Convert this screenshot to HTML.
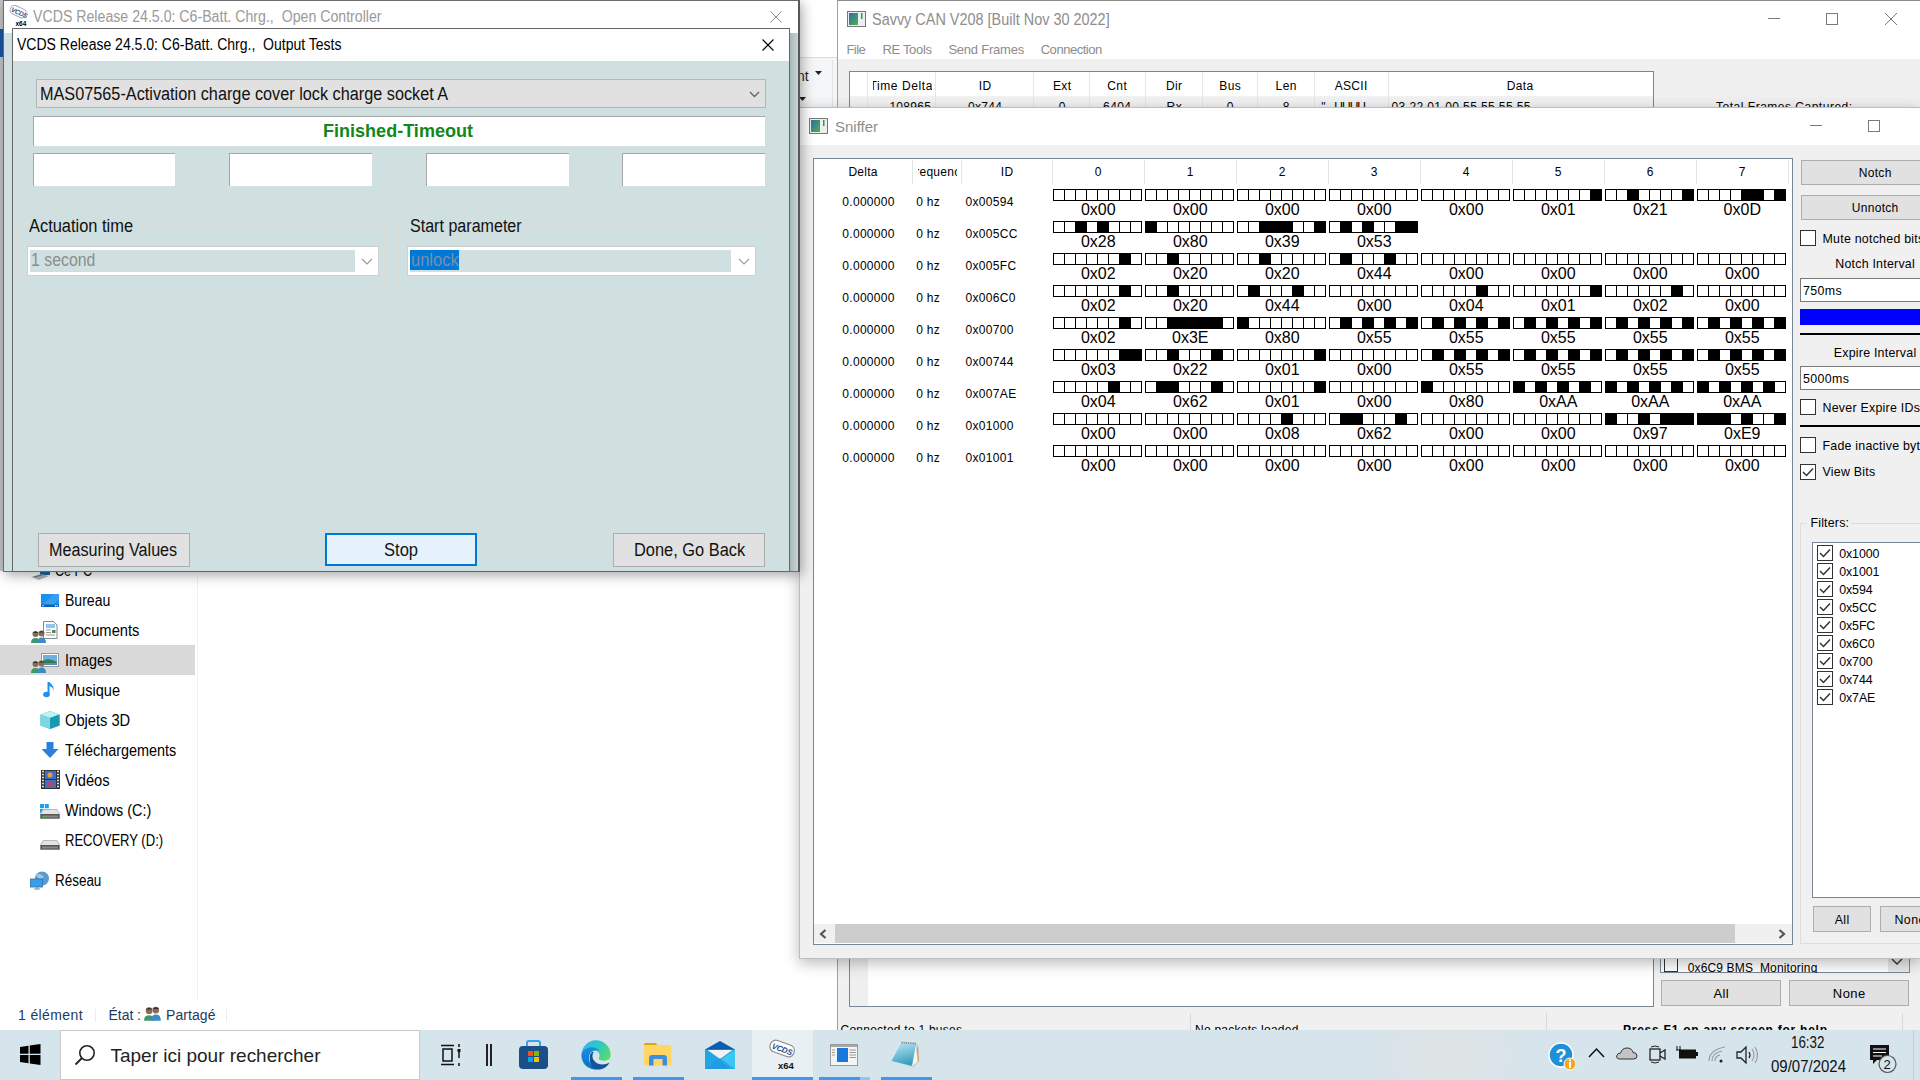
<!DOCTYPE html><html><head><meta charset="utf-8"><style>
html,body{margin:0;padding:0}
body{width:1920px;height:1080px;overflow:hidden;position:relative;background:#fff;font-family:"Liberation Sans",sans-serif}
.t{position:absolute;white-space:pre;line-height:1}
.r{position:absolute;box-sizing:border-box}
svg{position:absolute}
</style></head><body>
<div class="r" style="left:0px;top:0px;width:3px;height:571px;background:#c4c4c4"></div>
<div class="r" style="left:0px;top:29px;width:3px;height:28px;background:#1b56a5"></div>
<div class="r" style="left:798px;top:57px;width:40px;height:50px;background:#f5f6f7;border-top:1px solid #dadbdc"></div>
<div class="t" style="left:797.00px;top:68.00px;font-size:14px;line-height:16px;color:#1e1e1e;">nt</div>
<svg style="left:815px;top:71px" width="8" height="5"><path d="M0 0H7L3.5 4Z" fill="#222"/></svg>
<svg style="left:799px;top:97px" width="8" height="5"><path d="M0 0H7L3.5 4Z" fill="#222"/></svg>
<div class="r" style="left:832px;top:60px;width:1px;height:47px;background:#e2e3e4"></div>
<div class="r" style="left:197px;top:575px;width:1px;height:425px;background:#f0f0f0"></div>
<div class="r" style="left:0px;top:645px;width:195px;height:30px;background:#d9d9d9"></div>
<div class="t" style="left:65.40px;top:592.00px;font-size:16px;line-height:17px;color:#000;transform:scaleX(0.8779);transform-origin:0 0;">Bureau</div>
<div class="t" style="left:65.40px;top:622.00px;font-size:16px;line-height:17px;color:#000;transform:scaleX(0.9202);transform-origin:0 0;">Documents</div>
<div class="t" style="left:65.40px;top:652.00px;font-size:16px;line-height:17px;color:#000;transform:scaleX(0.8994);transform-origin:0 0;">Images</div>
<div class="t" style="left:65.40px;top:682.00px;font-size:16px;line-height:17px;color:#000;transform:scaleX(0.9094);transform-origin:0 0;">Musique</div>
<div class="t" style="left:65.40px;top:712.00px;font-size:16px;line-height:17px;color:#000;transform:scaleX(0.9154);transform-origin:0 0;">Objets 3D</div>
<div class="t" style="left:65.40px;top:742.00px;font-size:16px;line-height:17px;color:#000;transform:scaleX(0.9005);transform-origin:0 0;">Téléchargements</div>
<div class="t" style="left:65.40px;top:772.00px;font-size:16px;line-height:17px;color:#000;transform:scaleX(0.9169);transform-origin:0 0;">Vidéos</div>
<div class="t" style="left:65.40px;top:802.00px;font-size:16px;line-height:17px;color:#000;transform:scaleX(0.8979);transform-origin:0 0;">Windows (C:)</div>
<div class="t" style="left:65.40px;top:832.00px;font-size:16px;line-height:17px;color:#000;transform:scaleX(0.8153);transform-origin:0 0;">RECOVERY (D:)</div>
<div class="t" style="left:55.30px;top:872.00px;font-size:16px;line-height:17px;color:#000;transform:scaleX(0.8400);transform-origin:0 0;">Réseau</div>
<div class="t" style="left:55.30px;top:562.00px;font-size:16px;line-height:17px;color:#000;transform:scaleX(0.7852);transform-origin:0 0;">Ce PC</div>
<svg style="left:30px;top:566px" width="21" height="15"><path d="M10 2H20V9H10Z" fill="#1a6aa8"/><path d="M1 11L11 8L19 10L9 14Z" fill="#9aa4aa" opacity="0.8"/><path d="M4 11L12 9" stroke="#6a747a" stroke-width="1"/></svg>
<svg style="left:41px;top:594px" width="18" height="13"><rect x="0" y="0" width="18" height="13" fill="#1e90f0"/><path d="M0 13L12 0H18V5L10 13Z" fill="#fff" opacity="0.12"/><rect x="0" y="10.5" width="18" height="2.5" fill="#0c60b8"/><circle cx="2" cy="11.8" r="0.7" fill="#fff"/><circle cx="14.5" cy="11.8" r="0.7" fill="#fff"/><circle cx="16.2" cy="11.8" r="0.7" fill="#fff"/></svg>
<svg style="left:43px;top:621px" width="15" height="18"><path d="M0.5 0.5H10.5L14 4V17.5H0.5Z" fill="#fff" stroke="#888"/><path d="M3 4H12M3 6H12" stroke="#1e8be8" stroke-width="1.1"/><path d="M3 9H8M3 11.5H8M3 14H12" stroke="#999"/><rect x="9" y="9" width="3.5" height="3" fill="#4a8a5a"/></svg>
<svg style="left:31px;top:630px" width="16" height="14"><circle cx="4.5" cy="4" r="3" fill="#8a6a50"/><path d="M1.5 3Q4.5 0 7.5 3" fill="#333"/><path d="M0 13Q0 8 4.5 8Q9 8 9 13Z" fill="#3c9a6a"/><circle cx="10.5" cy="3.5" r="3" fill="#8a6a50"/><path d="M7.5 2.5Q10.5 -0.5 13.5 2.5" fill="#333"/><path d="M6.5 13Q6.5 7.5 10.5 7.5Q15 7.5 15 13Z" fill="#3d8ac8"/></svg>
<svg style="left:41px;top:653px" width="18" height="14"><rect x="0.5" y="0.5" width="17" height="13" fill="#fff" stroke="#999"/><rect x="2" y="2" width="14" height="10" fill="#6ab0e0"/><path d="M2 8Q7 4 16 9V12H2Z" fill="#3a7a50"/><rect x="2" y="10" width="14" height="2" fill="#4a90c0"/></svg>
<svg style="left:31px;top:660px" width="16" height="14"><circle cx="4.5" cy="4" r="3" fill="#8a6a50"/><path d="M1.5 3Q4.5 0 7.5 3" fill="#333"/><path d="M0 13Q0 8 4.5 8Q9 8 9 13Z" fill="#3c9a6a"/><circle cx="10.5" cy="3.5" r="3" fill="#8a6a50"/><path d="M7.5 2.5Q10.5 -0.5 13.5 2.5" fill="#333"/><path d="M6.5 13Q6.5 7.5 10.5 7.5Q15 7.5 15 13Z" fill="#3d8ac8"/></svg>
<svg style="left:43px;top:681px" width="13" height="17"><path d="M5.5 1V13" stroke="#1e90f0" stroke-width="2"/><ellipse cx="3.5" cy="13.5" rx="3.3" ry="2.8" fill="#1e90f0"/><path d="M6 1Q12 5 10 11Q11 6 6 5Z" fill="#1e90f0"/></svg>
<svg style="left:40px;top:711px" width="20" height="18"><path d="M10 0L19.5 3.5V14.5L10 18L0.5 14.5V3.5Z" fill="#2bb8c8"/><path d="M10 0L19.5 3.5L10 7L0.5 3.5Z" fill="#bff0f5"/><path d="M0.5 3.5L10 7V18L0.5 14.5Z" fill="#7ad8e5"/><path d="M10 7L19.5 3.5V14.5L10 18Z" fill="#1a9aae"/></svg>
<svg style="left:41px;top:742px" width="18" height="16"><path d="M5.5 0H12.5V7H17.5L9 16L0.5 7H5.5Z" fill="#2a80da"/></svg>
<svg style="left:41px;top:770px" width="19" height="19"><rect x="0" y="0" width="19" height="19" fill="#333"/><rect x="4" y="1" width="11" height="8" fill="#3a6fd0"/><rect x="4" y="10" width="11" height="8" fill="#3a6fd0"/><circle cx="9" cy="5" r="2.5" fill="#e8a030"/><circle cx="9.5" cy="14" r="2.5" fill="#d04040"/><path d="M1 1.5H3M1 4.5H3M1 7.5H3M1 10.5H3M1 13.5H3M1 16.5H3M16 1.5H18M16 4.5H18M16 7.5H18M16 10.5H18M16 13.5H18M16 16.5H18" stroke="#ddd" stroke-width="1.5"/></svg>
<svg style="left:40px;top:804px" width="9" height="9"><rect x="0" y="0" width="4" height="4" fill="#1aa0f0"/><rect x="4.8" y="0" width="4" height="4" fill="#1aa0f0"/><rect x="0" y="4.8" width="4" height="4" fill="#1aa0f0"/><rect x="4.8" y="4.8" width="4" height="4" fill="#1aa0f0"/></svg>
<svg style="left:40px;top:809px" width="20" height="10"><path d="M3 0.5H17L19.5 5V9.5H0.5V5Z" fill="#e4e4e4" stroke="#aaa" stroke-width="0.8"/><rect x="0.5" y="5" width="19" height="4.5" fill="#555"/><rect x="2" y="6.5" width="16" height="2" fill="#888"/><rect x="3" y="7" width="2" height="1.2" fill="#3c3"/></svg>
<svg style="left:40px;top:840px" width="20" height="10"><path d="M3 0.5H17L19.5 5V9.5H0.5V5Z" fill="#e4e4e4" stroke="#aaa" stroke-width="0.8"/><rect x="0.5" y="5" width="19" height="4.5" fill="#555"/><rect x="2" y="6.5" width="16" height="2" fill="#888"/><rect x="3" y="7" width="2" height="1.2" fill="#3c3"/></svg>
<svg style="left:30px;top:871px" width="20" height="19"><circle cx="12" cy="7.5" r="7" fill="#5a9ad0"/><path d="M6 4Q10 1 14 6Q11 9 8 7Z" fill="#9ac8ea"/><rect x="0.5" y="8" width="12" height="8" fill="#39a0e8" stroke="#2a70b0" stroke-width="0.8"/><path d="M4 18H10M7 16V18" stroke="#888" stroke-width="1.2"/></svg>
<div class="t" style="left:18.00px;top:1007.00px;font-size:14px;line-height:16px;color:#1e3a5f;letter-spacing:0.380px;">1 élément</div>
<div class="r" style="left:95px;top:1009px;width:1px;height:13px;background:#ececec"></div>
<div class="t" style="left:108.50px;top:1007.00px;font-size:14px;line-height:16px;color:#1e3a5f;letter-spacing:-0.038px;">État :</div>
<svg style="left:144px;top:1006px" width="18" height="16" viewBox="0 0 16 14"><circle cx="4.5" cy="4" r="3" fill="#8a6a50"/><path d="M1.5 3Q4.5 0 7.5 3" fill="#333"/><path d="M0 13Q0 8 4.5 8Q9 8 9 13Z" fill="#3c9a6a"/><circle cx="10.5" cy="3.5" r="3" fill="#8a6a50"/><path d="M7.5 2.5Q10.5 -0.5 13.5 2.5" fill="#333"/><path d="M6.5 13Q6.5 7.5 10.5 7.5Q15 7.5 15 13Z" fill="#3d8ac8"/></svg>
<div class="t" style="left:166.00px;top:1007.00px;font-size:14px;line-height:16px;color:#1e3a5f;letter-spacing:0.072px;">Partagé</div>
<div class="r" style="left:226px;top:1009px;width:1px;height:13px;background:#ececec"></div>
<div class="r" style="left:837px;top:0px;width:1083px;height:1080px;background:#f0f0f0;border-left:1px solid #a0a0a0;border-top:1px solid #8c8c8c"></div>
<div class="r" style="left:838px;top:1px;width:1082px;height:58px;background:#fff"></div>
<svg width="0" height="0" style="position:absolute"><defs><linearGradient id="gq" x1="0" y1="0" x2="1" y2="1"><stop offset="0" stop-color="#2f6fa8"/><stop offset="1" stop-color="#4caf50"/></linearGradient></defs></svg>
<svg style="left:847px;top:11px" width="19" height="16"><rect x="0.5" y="0.5" width="18" height="15" fill="#eee" stroke="#777"/><rect x="2" y="2" width="9" height="12" fill="url(#gq)"/><rect x="14" y="2" width="1.5" height="6" fill="#2a9a5a"/></svg>
<div class="t" style="left:872.30px;top:11.00px;font-size:16px;line-height:17px;color:#8d8d8d;transform:scaleX(0.9028);transform-origin:0 0;">Savvy CAN V208 [Built Nov 30 2022]</div>
<div class="r" style="left:1768px;top:18px;width:12px;height:1px;background:#7a7a7a"></div>
<div class="r" style="left:1826px;top:13px;width:12px;height:12px;border:1px solid #7a7a7a"></div>
<svg style="left:1884px;top:12px" width="14" height="14"><path d="M1 1L13 13M13 1L1 13" stroke="#7a7a7a" stroke-width="1"/></svg>
<div class="t" style="left:846.50px;top:42.00px;font-size:13px;line-height:15px;color:#8c8c8c;letter-spacing:-0.577px;">File</div>
<div class="t" style="left:882.50px;top:42.00px;font-size:13px;line-height:15px;color:#8c8c8c;letter-spacing:-0.329px;">RE Tools</div>
<div class="t" style="left:948.40px;top:42.00px;font-size:13px;line-height:15px;color:#8c8c8c;letter-spacing:-0.227px;">Send Frames</div>
<div class="t" style="left:1040.70px;top:42.00px;font-size:13px;line-height:15px;color:#8c8c8c;letter-spacing:-0.464px;">Connection</div>
<div class="r" style="left:849px;top:71px;width:805px;height:40px;background:#fff;border:1px solid #7a8594"></div>
<div class="r" style="left:850px;top:96px;width:803px;height:15px;background:#f2f2f2"></div>
<div class="r" style="left:867px;top:72px;width:1px;height:36px;background:#e6e6e6"></div>
<div class="r" style="left:935px;top:72px;width:1px;height:36px;background:#e6e6e6"></div>
<div class="r" style="left:1033px;top:72px;width:1px;height:36px;background:#e6e6e6"></div>
<div class="r" style="left:1089px;top:72px;width:1px;height:36px;background:#e6e6e6"></div>
<div class="r" style="left:1145px;top:72px;width:1px;height:36px;background:#e6e6e6"></div>
<div class="r" style="left:1202px;top:72px;width:1px;height:36px;background:#e6e6e6"></div>
<div class="r" style="left:1257px;top:72px;width:1px;height:36px;background:#e6e6e6"></div>
<div class="r" style="left:1314px;top:72px;width:1px;height:36px;background:#e6e6e6"></div>
<div class="r" style="left:1388px;top:72px;width:1px;height:36px;background:#e6e6e6"></div>
<div style="position:absolute;overflow:hidden;left:873px;top:74.00px;width:58.5px;height:22px"><div class="t" style="left:-3.50px;top:5px;font-size:12px;line-height:14px;color:#000;letter-spacing:0.600px;">Time Delta</div></div>
<div class="t" style="left:978.76px;top:79.00px;font-size:12px;line-height:14px;color:#000;letter-spacing:0.480px;">ID</div>
<div class="t" style="left:1052.98px;top:79.00px;font-size:12px;line-height:14px;color:#000;letter-spacing:0.347px;">Ext</div>
<div class="t" style="left:1107.30px;top:79.00px;font-size:12px;line-height:14px;color:#000;letter-spacing:0.373px;">Cnt</div>
<div class="t" style="left:1166.04px;top:79.00px;font-size:12px;line-height:14px;color:#000;letter-spacing:0.306px;">Dir</div>
<div class="t" style="left:1219.24px;top:79.00px;font-size:12px;line-height:14px;color:#000;letter-spacing:0.414px;">Bus</div>
<div class="t" style="left:1275.58px;top:79.00px;font-size:12px;line-height:14px;color:#000;letter-spacing:0.401px;">Len</div>
<div class="t" style="left:1334.71px;top:79.00px;font-size:12px;line-height:14px;color:#000;letter-spacing:0.313px;">ASCII</div>
<div class="t" style="left:1506.80px;top:79.00px;font-size:12px;line-height:14px;color:#000;letter-spacing:0.338px;">Data</div>
<div class="t" style="left:889.38px;top:100.00px;font-size:12px;line-height:14px;color:#000;letter-spacing:0.320px;">108965</div>
<div class="t" style="left:968.00px;top:100.00px;font-size:12px;line-height:14px;color:#000;letter-spacing:0.327px;">0x744</div>
<div class="t" style="left:1058.67px;top:100.00px;font-size:12px;line-height:14px;color:#000;">0</div>
<div class="t" style="left:1103.12px;top:100.00px;font-size:12px;line-height:14px;color:#000;letter-spacing:0.356px;">6404</div>
<div class="t" style="left:1166.39px;top:100.00px;font-size:12px;line-height:14px;color:#000;letter-spacing:0.586px;">Rx</div>
<div class="t" style="left:1226.67px;top:100.00px;font-size:12px;line-height:14px;color:#000;">0</div>
<div class="t" style="left:1282.67px;top:100.00px;font-size:12px;line-height:14px;color:#000;">8</div>
<div class="t" style="left:1321.20px;top:100.00px;font-size:12px;line-height:14px;color:#000;">"</div>
<div class="t" style="left:1334.30px;top:100.00px;font-size:12px;line-height:14px;color:#000;letter-spacing:-0.993px;">UUUU</div>
<div class="t" style="left:1391.50px;top:100.00px;font-size:12px;line-height:14px;color:#000;letter-spacing:0.403px;">03 22 01 00 55 55 55 55</div>
<div class="t" style="left:1716.10px;top:100.00px;font-size:12px;line-height:14px;color:#000;letter-spacing:0.505px;">Total Frames Captured:</div>
<div class="r" style="left:849px;top:955px;width:805px;height:52px;background:#fff;border:1px solid #7a8594;border-top:none"></div>
<div class="r" style="left:850px;top:955px;width:18px;height:51px;background:#efefef"></div>
<div class="r" style="left:1660px;top:955px;width:250px;height:18px;background:#fff;border:1px solid #7a8594;border-top:none"></div>
<div class="r" style="left:1664px;top:958px;width:14px;height:14px;border:1px solid #333;background:#fff"></div>
<div class="t" style="left:1687.70px;top:961.00px;font-size:12px;line-height:14px;color:#000;letter-spacing:0.152px;clip-path:inset(0 0 2px 0)">0x6C9 BMS_Monitoring</div>
<div class="r" style="left:1888px;top:955px;width:21px;height:17px;background:#e8e8e8"></div>
<svg style="left:1891px;top:958px" width="12" height="7"><path d="M1 1L6 6L11 1" fill="none" stroke="#333" stroke-width="1.4"/></svg>
<div class="r" style="left:1661px;top:980px;width:120px;height:26px;background:#e1e1e1;border:1px solid #adadad"></div>
<div class="t" style="left:1713.50px;top:986.00px;font-size:13px;line-height:15px;color:#000;letter-spacing:0.289px;">All</div>
<div class="r" style="left:1789px;top:980px;width:120px;height:26px;background:#e1e1e1;border:1px solid #adadad"></div>
<div class="t" style="left:1832.84px;top:986.00px;font-size:13px;line-height:15px;color:#000;letter-spacing:0.414px;">None</div>
<div class="t" style="left:840.50px;top:1023.00px;font-size:12px;line-height:14px;color:#000;letter-spacing:0.246px;">Connected to 1 buses</div>
<div class="r" style="left:1190px;top:1013px;width:1px;height:17px;background:#d8d8d8"></div>
<div class="t" style="left:1195.00px;top:1023.00px;font-size:12px;line-height:14px;color:#000;letter-spacing:0.249px;">No packets loaded</div>
<div class="r" style="left:1546px;top:1013px;width:1px;height:17px;background:#d8d8d8"></div>
<div class="t" style="left:1623.00px;top:1023.00px;font-size:12px;line-height:14px;color:#000;letter-spacing:0.754px;font-weight:bold;">Press F1 on any screen for help</div>
<div class="r" style="left:1902px;top:1013px;width:1px;height:17px;background:#d8d8d8"></div>
<div class="r" style="left:799px;top:107px;width:1121px;height:852px;background:#f0f0f0;border:1px solid #bdbdbd;border-right:none;box-shadow:0 4px 14px rgba(0,0,0,0.28)"></div>
<div class="r" style="left:800px;top:108px;width:1120px;height:37px;background:#fff"></div>
<svg style="left:809px;top:118px" width="19" height="16"><rect x="0.5" y="0.5" width="18" height="15" fill="#eee" stroke="#777"/><rect x="2" y="2" width="9" height="12" fill="url(#gq)"/><rect x="14" y="2" width="1.5" height="6" fill="#2a9a5a"/></svg>
<div class="t" style="left:835.00px;top:118.00px;font-size:15px;line-height:17px;color:#8d8d8d;">Sniffer</div>
<div class="r" style="left:1810px;top:125px;width:12px;height:1px;background:#7a7a7a"></div>
<div class="r" style="left:1868px;top:120px;width:12px;height:12px;border:1px solid #7a7a7a"></div>
<div class="r" style="left:813px;top:158px;width:980px;height:787px;background:#fff;border:1px solid #7a8594"></div>
<div class="r" style="left:912px;top:160px;width:1px;height:24px;background:#e5e5e5"></div>
<div class="r" style="left:961px;top:160px;width:1px;height:24px;background:#e5e5e5"></div>
<div class="r" style="left:1052px;top:160px;width:1px;height:24px;background:#e5e5e5"></div>
<div class="r" style="left:1144px;top:160px;width:1px;height:24px;background:#e5e5e5"></div>
<div class="r" style="left:1236px;top:160px;width:1px;height:24px;background:#e5e5e5"></div>
<div class="r" style="left:1328px;top:160px;width:1px;height:24px;background:#e5e5e5"></div>
<div class="r" style="left:1420px;top:160px;width:1px;height:24px;background:#e5e5e5"></div>
<div class="r" style="left:1512px;top:160px;width:1px;height:24px;background:#e5e5e5"></div>
<div class="r" style="left:1604px;top:160px;width:1px;height:24px;background:#e5e5e5"></div>
<div class="r" style="left:1696px;top:160px;width:1px;height:24px;background:#e5e5e5"></div>
<div class="r" style="left:1788px;top:160px;width:1px;height:24px;background:#e5e5e5"></div>
<div class="t" style="left:848.40px;top:165.00px;font-size:12px;line-height:14px;color:#000;letter-spacing:0.281px;">Delta</div>
<div style="position:absolute;overflow:hidden;left:917.5px;top:160.00px;width:39.5px;height:22px"><div class="t" style="left:-9.98px;top:5px;font-size:12px;line-height:14px;color:#000;letter-spacing:0.284px;">Frequency</div></div>
<div class="t" style="left:1000.76px;top:165.00px;font-size:12px;line-height:14px;color:#000;letter-spacing:0.480px;">ID</div>
<div class="t" style="left:1094.67px;top:165.00px;font-size:12px;line-height:14px;color:#000;">0</div>
<div class="t" style="left:1186.67px;top:165.00px;font-size:12px;line-height:14px;color:#000;">1</div>
<div class="t" style="left:1278.67px;top:165.00px;font-size:12px;line-height:14px;color:#000;">2</div>
<div class="t" style="left:1370.67px;top:165.00px;font-size:12px;line-height:14px;color:#000;">3</div>
<div class="t" style="left:1462.67px;top:165.00px;font-size:12px;line-height:14px;color:#000;">4</div>
<div class="t" style="left:1554.67px;top:165.00px;font-size:12px;line-height:14px;color:#000;">5</div>
<div class="t" style="left:1646.67px;top:165.00px;font-size:12px;line-height:14px;color:#000;">6</div>
<div class="t" style="left:1738.67px;top:165.00px;font-size:12px;line-height:14px;color:#000;">7</div>
<div class="t" style="left:842.36px;top:195.00px;font-size:12px;line-height:14px;color:#000;letter-spacing:0.286px;">0.000000</div>
<div class="t" style="left:916.20px;top:195.00px;font-size:12px;line-height:14px;color:#000;letter-spacing:0.302px;">0 hz</div>
<div class="t" style="left:965.50px;top:195.00px;font-size:12px;line-height:14px;color:#000;letter-spacing:0.307px;">0x00594</div>
<div class="t" style="left:1080.94px;top:201.00px;font-size:16px;line-height:17px;color:#000;">0x00</div>
<div class="t" style="left:1172.94px;top:201.00px;font-size:16px;line-height:17px;color:#000;">0x00</div>
<div class="t" style="left:1264.94px;top:201.00px;font-size:16px;line-height:17px;color:#000;">0x00</div>
<div class="t" style="left:1356.94px;top:201.00px;font-size:16px;line-height:17px;color:#000;">0x00</div>
<div class="t" style="left:1448.94px;top:201.00px;font-size:16px;line-height:17px;color:#000;">0x00</div>
<div class="t" style="left:1540.94px;top:201.00px;font-size:16px;line-height:17px;color:#000;">0x01</div>
<div class="t" style="left:1632.94px;top:201.00px;font-size:16px;line-height:17px;color:#000;">0x21</div>
<div class="t" style="left:1723.62px;top:201.00px;font-size:16px;line-height:17px;color:#000;">0x0D</div>
<div class="t" style="left:842.36px;top:227.00px;font-size:12px;line-height:14px;color:#000;letter-spacing:0.286px;">0.000000</div>
<div class="t" style="left:916.20px;top:227.00px;font-size:12px;line-height:14px;color:#000;letter-spacing:0.302px;">0 hz</div>
<div class="t" style="left:965.50px;top:227.00px;font-size:12px;line-height:14px;color:#000;letter-spacing:0.334px;">0x005CC</div>
<div class="t" style="left:1080.94px;top:233.00px;font-size:16px;line-height:17px;color:#000;">0x28</div>
<div class="t" style="left:1172.94px;top:233.00px;font-size:16px;line-height:17px;color:#000;">0x80</div>
<div class="t" style="left:1264.94px;top:233.00px;font-size:16px;line-height:17px;color:#000;">0x39</div>
<div class="t" style="left:1356.94px;top:233.00px;font-size:16px;line-height:17px;color:#000;">0x53</div>
<div class="t" style="left:842.36px;top:259.00px;font-size:12px;line-height:14px;color:#000;letter-spacing:0.286px;">0.000000</div>
<div class="t" style="left:916.20px;top:259.00px;font-size:12px;line-height:14px;color:#000;letter-spacing:0.302px;">0 hz</div>
<div class="t" style="left:965.50px;top:259.00px;font-size:12px;line-height:14px;color:#000;letter-spacing:0.325px;">0x005FC</div>
<div class="t" style="left:1080.94px;top:265.00px;font-size:16px;line-height:17px;color:#000;">0x02</div>
<div class="t" style="left:1172.94px;top:265.00px;font-size:16px;line-height:17px;color:#000;">0x20</div>
<div class="t" style="left:1264.94px;top:265.00px;font-size:16px;line-height:17px;color:#000;">0x20</div>
<div class="t" style="left:1356.94px;top:265.00px;font-size:16px;line-height:17px;color:#000;">0x44</div>
<div class="t" style="left:1448.94px;top:265.00px;font-size:16px;line-height:17px;color:#000;">0x00</div>
<div class="t" style="left:1540.94px;top:265.00px;font-size:16px;line-height:17px;color:#000;">0x00</div>
<div class="t" style="left:1632.94px;top:265.00px;font-size:16px;line-height:17px;color:#000;">0x00</div>
<div class="t" style="left:1724.94px;top:265.00px;font-size:16px;line-height:17px;color:#000;">0x00</div>
<div class="t" style="left:842.36px;top:291.00px;font-size:12px;line-height:14px;color:#000;letter-spacing:0.286px;">0.000000</div>
<div class="t" style="left:916.20px;top:291.00px;font-size:12px;line-height:14px;color:#000;letter-spacing:0.302px;">0 hz</div>
<div class="t" style="left:965.50px;top:291.00px;font-size:12px;line-height:14px;color:#000;letter-spacing:0.320px;">0x006C0</div>
<div class="t" style="left:1080.94px;top:297.00px;font-size:16px;line-height:17px;color:#000;">0x02</div>
<div class="t" style="left:1172.94px;top:297.00px;font-size:16px;line-height:17px;color:#000;">0x20</div>
<div class="t" style="left:1264.94px;top:297.00px;font-size:16px;line-height:17px;color:#000;">0x44</div>
<div class="t" style="left:1356.94px;top:297.00px;font-size:16px;line-height:17px;color:#000;">0x00</div>
<div class="t" style="left:1448.94px;top:297.00px;font-size:16px;line-height:17px;color:#000;">0x04</div>
<div class="t" style="left:1540.94px;top:297.00px;font-size:16px;line-height:17px;color:#000;">0x01</div>
<div class="t" style="left:1632.94px;top:297.00px;font-size:16px;line-height:17px;color:#000;">0x02</div>
<div class="t" style="left:1724.94px;top:297.00px;font-size:16px;line-height:17px;color:#000;">0x00</div>
<div class="t" style="left:842.36px;top:323.00px;font-size:12px;line-height:14px;color:#000;letter-spacing:0.286px;">0.000000</div>
<div class="t" style="left:916.20px;top:323.00px;font-size:12px;line-height:14px;color:#000;letter-spacing:0.302px;">0 hz</div>
<div class="t" style="left:965.50px;top:323.00px;font-size:12px;line-height:14px;color:#000;letter-spacing:0.307px;">0x00700</div>
<div class="t" style="left:1080.94px;top:329.00px;font-size:16px;line-height:17px;color:#000;">0x02</div>
<div class="t" style="left:1172.06px;top:329.00px;font-size:16px;line-height:17px;color:#000;">0x3E</div>
<div class="t" style="left:1264.94px;top:329.00px;font-size:16px;line-height:17px;color:#000;">0x80</div>
<div class="t" style="left:1356.94px;top:329.00px;font-size:16px;line-height:17px;color:#000;">0x55</div>
<div class="t" style="left:1448.94px;top:329.00px;font-size:16px;line-height:17px;color:#000;">0x55</div>
<div class="t" style="left:1540.94px;top:329.00px;font-size:16px;line-height:17px;color:#000;">0x55</div>
<div class="t" style="left:1632.94px;top:329.00px;font-size:16px;line-height:17px;color:#000;">0x55</div>
<div class="t" style="left:1724.94px;top:329.00px;font-size:16px;line-height:17px;color:#000;">0x55</div>
<div class="t" style="left:842.36px;top:355.00px;font-size:12px;line-height:14px;color:#000;letter-spacing:0.286px;">0.000000</div>
<div class="t" style="left:916.20px;top:355.00px;font-size:12px;line-height:14px;color:#000;letter-spacing:0.302px;">0 hz</div>
<div class="t" style="left:965.50px;top:355.00px;font-size:12px;line-height:14px;color:#000;letter-spacing:0.307px;">0x00744</div>
<div class="t" style="left:1080.94px;top:361.00px;font-size:16px;line-height:17px;color:#000;">0x03</div>
<div class="t" style="left:1172.94px;top:361.00px;font-size:16px;line-height:17px;color:#000;">0x22</div>
<div class="t" style="left:1264.94px;top:361.00px;font-size:16px;line-height:17px;color:#000;">0x01</div>
<div class="t" style="left:1356.94px;top:361.00px;font-size:16px;line-height:17px;color:#000;">0x00</div>
<div class="t" style="left:1448.94px;top:361.00px;font-size:16px;line-height:17px;color:#000;">0x55</div>
<div class="t" style="left:1540.94px;top:361.00px;font-size:16px;line-height:17px;color:#000;">0x55</div>
<div class="t" style="left:1632.94px;top:361.00px;font-size:16px;line-height:17px;color:#000;">0x55</div>
<div class="t" style="left:1724.94px;top:361.00px;font-size:16px;line-height:17px;color:#000;">0x55</div>
<div class="t" style="left:842.36px;top:387.00px;font-size:12px;line-height:14px;color:#000;letter-spacing:0.286px;">0.000000</div>
<div class="t" style="left:916.20px;top:387.00px;font-size:12px;line-height:14px;color:#000;letter-spacing:0.302px;">0 hz</div>
<div class="t" style="left:965.50px;top:387.00px;font-size:12px;line-height:14px;color:#000;letter-spacing:0.325px;">0x007AE</div>
<div class="t" style="left:1080.94px;top:393.00px;font-size:16px;line-height:17px;color:#000;">0x04</div>
<div class="t" style="left:1172.94px;top:393.00px;font-size:16px;line-height:17px;color:#000;">0x62</div>
<div class="t" style="left:1264.94px;top:393.00px;font-size:16px;line-height:17px;color:#000;">0x01</div>
<div class="t" style="left:1356.94px;top:393.00px;font-size:16px;line-height:17px;color:#000;">0x00</div>
<div class="t" style="left:1448.94px;top:393.00px;font-size:16px;line-height:17px;color:#000;">0x80</div>
<div class="t" style="left:1539.14px;top:393.00px;font-size:16px;line-height:17px;color:#000;">0xAA</div>
<div class="t" style="left:1631.14px;top:393.00px;font-size:16px;line-height:17px;color:#000;">0xAA</div>
<div class="t" style="left:1723.14px;top:393.00px;font-size:16px;line-height:17px;color:#000;">0xAA</div>
<div class="t" style="left:842.36px;top:419.00px;font-size:12px;line-height:14px;color:#000;letter-spacing:0.286px;">0.000000</div>
<div class="t" style="left:916.20px;top:419.00px;font-size:12px;line-height:14px;color:#000;letter-spacing:0.302px;">0 hz</div>
<div class="t" style="left:965.50px;top:419.00px;font-size:12px;line-height:14px;color:#000;letter-spacing:0.307px;">0x01000</div>
<div class="t" style="left:1080.94px;top:425.00px;font-size:16px;line-height:17px;color:#000;">0x00</div>
<div class="t" style="left:1172.94px;top:425.00px;font-size:16px;line-height:17px;color:#000;">0x00</div>
<div class="t" style="left:1264.94px;top:425.00px;font-size:16px;line-height:17px;color:#000;">0x08</div>
<div class="t" style="left:1356.94px;top:425.00px;font-size:16px;line-height:17px;color:#000;">0x62</div>
<div class="t" style="left:1448.94px;top:425.00px;font-size:16px;line-height:17px;color:#000;">0x00</div>
<div class="t" style="left:1540.94px;top:425.00px;font-size:16px;line-height:17px;color:#000;">0x00</div>
<div class="t" style="left:1632.94px;top:425.00px;font-size:16px;line-height:17px;color:#000;">0x97</div>
<div class="t" style="left:1724.06px;top:425.00px;font-size:16px;line-height:17px;color:#000;">0xE9</div>
<div class="t" style="left:842.36px;top:451.00px;font-size:12px;line-height:14px;color:#000;letter-spacing:0.286px;">0.000000</div>
<div class="t" style="left:916.20px;top:451.00px;font-size:12px;line-height:14px;color:#000;letter-spacing:0.302px;">0 hz</div>
<div class="t" style="left:965.50px;top:451.00px;font-size:12px;line-height:14px;color:#000;letter-spacing:0.307px;">0x01001</div>
<div class="t" style="left:1080.94px;top:457.00px;font-size:16px;line-height:17px;color:#000;">0x00</div>
<div class="t" style="left:1172.94px;top:457.00px;font-size:16px;line-height:17px;color:#000;">0x00</div>
<div class="t" style="left:1264.94px;top:457.00px;font-size:16px;line-height:17px;color:#000;">0x00</div>
<div class="t" style="left:1356.94px;top:457.00px;font-size:16px;line-height:17px;color:#000;">0x00</div>
<div class="t" style="left:1448.94px;top:457.00px;font-size:16px;line-height:17px;color:#000;">0x00</div>
<div class="t" style="left:1540.94px;top:457.00px;font-size:16px;line-height:17px;color:#000;">0x00</div>
<div class="t" style="left:1632.94px;top:457.00px;font-size:16px;line-height:17px;color:#000;">0x00</div>
<div class="t" style="left:1724.94px;top:457.00px;font-size:16px;line-height:17px;color:#000;">0x00</div>
<svg style="left:0;top:0" width="1920" height="1080" shape-rendering="crispEdges"><rect x="1053.5" y="189.5" width="88" height="11" fill="#fff" stroke="#000"/><path d="M1064.5 189V201" stroke="#000"/><path d="M1075.5 189V201" stroke="#000"/><path d="M1086.5 189V201" stroke="#000"/><path d="M1097.5 189V201" stroke="#000"/><path d="M1108.5 189V201" stroke="#000"/><path d="M1119.5 189V201" stroke="#000"/><path d="M1130.5 189V201" stroke="#000"/><rect x="1145.5" y="189.5" width="88" height="11" fill="#fff" stroke="#000"/><path d="M1156.5 189V201" stroke="#000"/><path d="M1167.5 189V201" stroke="#000"/><path d="M1178.5 189V201" stroke="#000"/><path d="M1189.5 189V201" stroke="#000"/><path d="M1200.5 189V201" stroke="#000"/><path d="M1211.5 189V201" stroke="#000"/><path d="M1222.5 189V201" stroke="#000"/><rect x="1237.5" y="189.5" width="88" height="11" fill="#fff" stroke="#000"/><path d="M1248.5 189V201" stroke="#000"/><path d="M1259.5 189V201" stroke="#000"/><path d="M1270.5 189V201" stroke="#000"/><path d="M1281.5 189V201" stroke="#000"/><path d="M1292.5 189V201" stroke="#000"/><path d="M1303.5 189V201" stroke="#000"/><path d="M1314.5 189V201" stroke="#000"/><rect x="1329.5" y="189.5" width="88" height="11" fill="#fff" stroke="#000"/><path d="M1340.5 189V201" stroke="#000"/><path d="M1351.5 189V201" stroke="#000"/><path d="M1362.5 189V201" stroke="#000"/><path d="M1373.5 189V201" stroke="#000"/><path d="M1384.5 189V201" stroke="#000"/><path d="M1395.5 189V201" stroke="#000"/><path d="M1406.5 189V201" stroke="#000"/><rect x="1421.5" y="189.5" width="88" height="11" fill="#fff" stroke="#000"/><path d="M1432.5 189V201" stroke="#000"/><path d="M1443.5 189V201" stroke="#000"/><path d="M1454.5 189V201" stroke="#000"/><path d="M1465.5 189V201" stroke="#000"/><path d="M1476.5 189V201" stroke="#000"/><path d="M1487.5 189V201" stroke="#000"/><path d="M1498.5 189V201" stroke="#000"/><rect x="1513.5" y="189.5" width="88" height="11" fill="#fff" stroke="#000"/><path d="M1524.5 189V201" stroke="#000"/><path d="M1535.5 189V201" stroke="#000"/><path d="M1546.5 189V201" stroke="#000"/><path d="M1557.5 189V201" stroke="#000"/><path d="M1568.5 189V201" stroke="#000"/><path d="M1579.5 189V201" stroke="#000"/><path d="M1590.5 189V201" stroke="#000"/><rect x="1590" y="189" width="12" height="12" fill="#000"/><rect x="1605.5" y="189.5" width="88" height="11" fill="#fff" stroke="#000"/><path d="M1616.5 189V201" stroke="#000"/><path d="M1627.5 189V201" stroke="#000"/><path d="M1638.5 189V201" stroke="#000"/><path d="M1649.5 189V201" stroke="#000"/><path d="M1660.5 189V201" stroke="#000"/><path d="M1671.5 189V201" stroke="#000"/><path d="M1682.5 189V201" stroke="#000"/><rect x="1627" y="189" width="12" height="12" fill="#000"/><rect x="1682" y="189" width="12" height="12" fill="#000"/><rect x="1697.5" y="189.5" width="88" height="11" fill="#fff" stroke="#000"/><path d="M1708.5 189V201" stroke="#000"/><path d="M1719.5 189V201" stroke="#000"/><path d="M1730.5 189V201" stroke="#000"/><path d="M1741.5 189V201" stroke="#000"/><path d="M1752.5 189V201" stroke="#000"/><path d="M1763.5 189V201" stroke="#000"/><path d="M1774.5 189V201" stroke="#000"/><rect x="1741" y="189" width="12" height="12" fill="#000"/><rect x="1752" y="189" width="12" height="12" fill="#000"/><rect x="1774" y="189" width="12" height="12" fill="#000"/><rect x="1053.5" y="221.5" width="88" height="11" fill="#fff" stroke="#000"/><path d="M1064.5 221V233" stroke="#000"/><path d="M1075.5 221V233" stroke="#000"/><path d="M1086.5 221V233" stroke="#000"/><path d="M1097.5 221V233" stroke="#000"/><path d="M1108.5 221V233" stroke="#000"/><path d="M1119.5 221V233" stroke="#000"/><path d="M1130.5 221V233" stroke="#000"/><rect x="1075" y="221" width="12" height="12" fill="#000"/><rect x="1097" y="221" width="12" height="12" fill="#000"/><rect x="1145.5" y="221.5" width="88" height="11" fill="#fff" stroke="#000"/><path d="M1156.5 221V233" stroke="#000"/><path d="M1167.5 221V233" stroke="#000"/><path d="M1178.5 221V233" stroke="#000"/><path d="M1189.5 221V233" stroke="#000"/><path d="M1200.5 221V233" stroke="#000"/><path d="M1211.5 221V233" stroke="#000"/><path d="M1222.5 221V233" stroke="#000"/><rect x="1145" y="221" width="12" height="12" fill="#000"/><rect x="1237.5" y="221.5" width="88" height="11" fill="#fff" stroke="#000"/><path d="M1248.5 221V233" stroke="#000"/><path d="M1259.5 221V233" stroke="#000"/><path d="M1270.5 221V233" stroke="#000"/><path d="M1281.5 221V233" stroke="#000"/><path d="M1292.5 221V233" stroke="#000"/><path d="M1303.5 221V233" stroke="#000"/><path d="M1314.5 221V233" stroke="#000"/><rect x="1259" y="221" width="12" height="12" fill="#000"/><rect x="1270" y="221" width="12" height="12" fill="#000"/><rect x="1281" y="221" width="12" height="12" fill="#000"/><rect x="1314" y="221" width="12" height="12" fill="#000"/><rect x="1329.5" y="221.5" width="88" height="11" fill="#fff" stroke="#000"/><path d="M1340.5 221V233" stroke="#000"/><path d="M1351.5 221V233" stroke="#000"/><path d="M1362.5 221V233" stroke="#000"/><path d="M1373.5 221V233" stroke="#000"/><path d="M1384.5 221V233" stroke="#000"/><path d="M1395.5 221V233" stroke="#000"/><path d="M1406.5 221V233" stroke="#000"/><rect x="1340" y="221" width="12" height="12" fill="#000"/><rect x="1362" y="221" width="12" height="12" fill="#000"/><rect x="1395" y="221" width="12" height="12" fill="#000"/><rect x="1406" y="221" width="12" height="12" fill="#000"/><rect x="1053.5" y="253.5" width="88" height="11" fill="#fff" stroke="#000"/><path d="M1064.5 253V265" stroke="#000"/><path d="M1075.5 253V265" stroke="#000"/><path d="M1086.5 253V265" stroke="#000"/><path d="M1097.5 253V265" stroke="#000"/><path d="M1108.5 253V265" stroke="#000"/><path d="M1119.5 253V265" stroke="#000"/><path d="M1130.5 253V265" stroke="#000"/><rect x="1119" y="253" width="12" height="12" fill="#000"/><rect x="1145.5" y="253.5" width="88" height="11" fill="#fff" stroke="#000"/><path d="M1156.5 253V265" stroke="#000"/><path d="M1167.5 253V265" stroke="#000"/><path d="M1178.5 253V265" stroke="#000"/><path d="M1189.5 253V265" stroke="#000"/><path d="M1200.5 253V265" stroke="#000"/><path d="M1211.5 253V265" stroke="#000"/><path d="M1222.5 253V265" stroke="#000"/><rect x="1167" y="253" width="12" height="12" fill="#000"/><rect x="1237.5" y="253.5" width="88" height="11" fill="#fff" stroke="#000"/><path d="M1248.5 253V265" stroke="#000"/><path d="M1259.5 253V265" stroke="#000"/><path d="M1270.5 253V265" stroke="#000"/><path d="M1281.5 253V265" stroke="#000"/><path d="M1292.5 253V265" stroke="#000"/><path d="M1303.5 253V265" stroke="#000"/><path d="M1314.5 253V265" stroke="#000"/><rect x="1259" y="253" width="12" height="12" fill="#000"/><rect x="1329.5" y="253.5" width="88" height="11" fill="#fff" stroke="#000"/><path d="M1340.5 253V265" stroke="#000"/><path d="M1351.5 253V265" stroke="#000"/><path d="M1362.5 253V265" stroke="#000"/><path d="M1373.5 253V265" stroke="#000"/><path d="M1384.5 253V265" stroke="#000"/><path d="M1395.5 253V265" stroke="#000"/><path d="M1406.5 253V265" stroke="#000"/><rect x="1340" y="253" width="12" height="12" fill="#000"/><rect x="1384" y="253" width="12" height="12" fill="#000"/><rect x="1421.5" y="253.5" width="88" height="11" fill="#fff" stroke="#000"/><path d="M1432.5 253V265" stroke="#000"/><path d="M1443.5 253V265" stroke="#000"/><path d="M1454.5 253V265" stroke="#000"/><path d="M1465.5 253V265" stroke="#000"/><path d="M1476.5 253V265" stroke="#000"/><path d="M1487.5 253V265" stroke="#000"/><path d="M1498.5 253V265" stroke="#000"/><rect x="1513.5" y="253.5" width="88" height="11" fill="#fff" stroke="#000"/><path d="M1524.5 253V265" stroke="#000"/><path d="M1535.5 253V265" stroke="#000"/><path d="M1546.5 253V265" stroke="#000"/><path d="M1557.5 253V265" stroke="#000"/><path d="M1568.5 253V265" stroke="#000"/><path d="M1579.5 253V265" stroke="#000"/><path d="M1590.5 253V265" stroke="#000"/><rect x="1605.5" y="253.5" width="88" height="11" fill="#fff" stroke="#000"/><path d="M1616.5 253V265" stroke="#000"/><path d="M1627.5 253V265" stroke="#000"/><path d="M1638.5 253V265" stroke="#000"/><path d="M1649.5 253V265" stroke="#000"/><path d="M1660.5 253V265" stroke="#000"/><path d="M1671.5 253V265" stroke="#000"/><path d="M1682.5 253V265" stroke="#000"/><rect x="1697.5" y="253.5" width="88" height="11" fill="#fff" stroke="#000"/><path d="M1708.5 253V265" stroke="#000"/><path d="M1719.5 253V265" stroke="#000"/><path d="M1730.5 253V265" stroke="#000"/><path d="M1741.5 253V265" stroke="#000"/><path d="M1752.5 253V265" stroke="#000"/><path d="M1763.5 253V265" stroke="#000"/><path d="M1774.5 253V265" stroke="#000"/><rect x="1053.5" y="285.5" width="88" height="11" fill="#fff" stroke="#000"/><path d="M1064.5 285V297" stroke="#000"/><path d="M1075.5 285V297" stroke="#000"/><path d="M1086.5 285V297" stroke="#000"/><path d="M1097.5 285V297" stroke="#000"/><path d="M1108.5 285V297" stroke="#000"/><path d="M1119.5 285V297" stroke="#000"/><path d="M1130.5 285V297" stroke="#000"/><rect x="1119" y="285" width="12" height="12" fill="#000"/><rect x="1145.5" y="285.5" width="88" height="11" fill="#fff" stroke="#000"/><path d="M1156.5 285V297" stroke="#000"/><path d="M1167.5 285V297" stroke="#000"/><path d="M1178.5 285V297" stroke="#000"/><path d="M1189.5 285V297" stroke="#000"/><path d="M1200.5 285V297" stroke="#000"/><path d="M1211.5 285V297" stroke="#000"/><path d="M1222.5 285V297" stroke="#000"/><rect x="1167" y="285" width="12" height="12" fill="#000"/><rect x="1237.5" y="285.5" width="88" height="11" fill="#fff" stroke="#000"/><path d="M1248.5 285V297" stroke="#000"/><path d="M1259.5 285V297" stroke="#000"/><path d="M1270.5 285V297" stroke="#000"/><path d="M1281.5 285V297" stroke="#000"/><path d="M1292.5 285V297" stroke="#000"/><path d="M1303.5 285V297" stroke="#000"/><path d="M1314.5 285V297" stroke="#000"/><rect x="1248" y="285" width="12" height="12" fill="#000"/><rect x="1292" y="285" width="12" height="12" fill="#000"/><rect x="1329.5" y="285.5" width="88" height="11" fill="#fff" stroke="#000"/><path d="M1340.5 285V297" stroke="#000"/><path d="M1351.5 285V297" stroke="#000"/><path d="M1362.5 285V297" stroke="#000"/><path d="M1373.5 285V297" stroke="#000"/><path d="M1384.5 285V297" stroke="#000"/><path d="M1395.5 285V297" stroke="#000"/><path d="M1406.5 285V297" stroke="#000"/><rect x="1421.5" y="285.5" width="88" height="11" fill="#fff" stroke="#000"/><path d="M1432.5 285V297" stroke="#000"/><path d="M1443.5 285V297" stroke="#000"/><path d="M1454.5 285V297" stroke="#000"/><path d="M1465.5 285V297" stroke="#000"/><path d="M1476.5 285V297" stroke="#000"/><path d="M1487.5 285V297" stroke="#000"/><path d="M1498.5 285V297" stroke="#000"/><rect x="1476" y="285" width="12" height="12" fill="#000"/><rect x="1513.5" y="285.5" width="88" height="11" fill="#fff" stroke="#000"/><path d="M1524.5 285V297" stroke="#000"/><path d="M1535.5 285V297" stroke="#000"/><path d="M1546.5 285V297" stroke="#000"/><path d="M1557.5 285V297" stroke="#000"/><path d="M1568.5 285V297" stroke="#000"/><path d="M1579.5 285V297" stroke="#000"/><path d="M1590.5 285V297" stroke="#000"/><rect x="1590" y="285" width="12" height="12" fill="#000"/><rect x="1605.5" y="285.5" width="88" height="11" fill="#fff" stroke="#000"/><path d="M1616.5 285V297" stroke="#000"/><path d="M1627.5 285V297" stroke="#000"/><path d="M1638.5 285V297" stroke="#000"/><path d="M1649.5 285V297" stroke="#000"/><path d="M1660.5 285V297" stroke="#000"/><path d="M1671.5 285V297" stroke="#000"/><path d="M1682.5 285V297" stroke="#000"/><rect x="1671" y="285" width="12" height="12" fill="#000"/><rect x="1697.5" y="285.5" width="88" height="11" fill="#fff" stroke="#000"/><path d="M1708.5 285V297" stroke="#000"/><path d="M1719.5 285V297" stroke="#000"/><path d="M1730.5 285V297" stroke="#000"/><path d="M1741.5 285V297" stroke="#000"/><path d="M1752.5 285V297" stroke="#000"/><path d="M1763.5 285V297" stroke="#000"/><path d="M1774.5 285V297" stroke="#000"/><rect x="1053.5" y="317.5" width="88" height="11" fill="#fff" stroke="#000"/><path d="M1064.5 317V329" stroke="#000"/><path d="M1075.5 317V329" stroke="#000"/><path d="M1086.5 317V329" stroke="#000"/><path d="M1097.5 317V329" stroke="#000"/><path d="M1108.5 317V329" stroke="#000"/><path d="M1119.5 317V329" stroke="#000"/><path d="M1130.5 317V329" stroke="#000"/><rect x="1119" y="317" width="12" height="12" fill="#000"/><rect x="1145.5" y="317.5" width="88" height="11" fill="#fff" stroke="#000"/><path d="M1156.5 317V329" stroke="#000"/><path d="M1167.5 317V329" stroke="#000"/><path d="M1178.5 317V329" stroke="#000"/><path d="M1189.5 317V329" stroke="#000"/><path d="M1200.5 317V329" stroke="#000"/><path d="M1211.5 317V329" stroke="#000"/><path d="M1222.5 317V329" stroke="#000"/><rect x="1167" y="317" width="12" height="12" fill="#000"/><rect x="1178" y="317" width="12" height="12" fill="#000"/><rect x="1189" y="317" width="12" height="12" fill="#000"/><rect x="1200" y="317" width="12" height="12" fill="#000"/><rect x="1211" y="317" width="12" height="12" fill="#000"/><rect x="1237.5" y="317.5" width="88" height="11" fill="#fff" stroke="#000"/><path d="M1248.5 317V329" stroke="#000"/><path d="M1259.5 317V329" stroke="#000"/><path d="M1270.5 317V329" stroke="#000"/><path d="M1281.5 317V329" stroke="#000"/><path d="M1292.5 317V329" stroke="#000"/><path d="M1303.5 317V329" stroke="#000"/><path d="M1314.5 317V329" stroke="#000"/><rect x="1237" y="317" width="12" height="12" fill="#000"/><rect x="1329.5" y="317.5" width="88" height="11" fill="#fff" stroke="#000"/><path d="M1340.5 317V329" stroke="#000"/><path d="M1351.5 317V329" stroke="#000"/><path d="M1362.5 317V329" stroke="#000"/><path d="M1373.5 317V329" stroke="#000"/><path d="M1384.5 317V329" stroke="#000"/><path d="M1395.5 317V329" stroke="#000"/><path d="M1406.5 317V329" stroke="#000"/><rect x="1340" y="317" width="12" height="12" fill="#000"/><rect x="1362" y="317" width="12" height="12" fill="#000"/><rect x="1384" y="317" width="12" height="12" fill="#000"/><rect x="1406" y="317" width="12" height="12" fill="#000"/><rect x="1421.5" y="317.5" width="88" height="11" fill="#fff" stroke="#000"/><path d="M1432.5 317V329" stroke="#000"/><path d="M1443.5 317V329" stroke="#000"/><path d="M1454.5 317V329" stroke="#000"/><path d="M1465.5 317V329" stroke="#000"/><path d="M1476.5 317V329" stroke="#000"/><path d="M1487.5 317V329" stroke="#000"/><path d="M1498.5 317V329" stroke="#000"/><rect x="1432" y="317" width="12" height="12" fill="#000"/><rect x="1454" y="317" width="12" height="12" fill="#000"/><rect x="1476" y="317" width="12" height="12" fill="#000"/><rect x="1498" y="317" width="12" height="12" fill="#000"/><rect x="1513.5" y="317.5" width="88" height="11" fill="#fff" stroke="#000"/><path d="M1524.5 317V329" stroke="#000"/><path d="M1535.5 317V329" stroke="#000"/><path d="M1546.5 317V329" stroke="#000"/><path d="M1557.5 317V329" stroke="#000"/><path d="M1568.5 317V329" stroke="#000"/><path d="M1579.5 317V329" stroke="#000"/><path d="M1590.5 317V329" stroke="#000"/><rect x="1524" y="317" width="12" height="12" fill="#000"/><rect x="1546" y="317" width="12" height="12" fill="#000"/><rect x="1568" y="317" width="12" height="12" fill="#000"/><rect x="1590" y="317" width="12" height="12" fill="#000"/><rect x="1605.5" y="317.5" width="88" height="11" fill="#fff" stroke="#000"/><path d="M1616.5 317V329" stroke="#000"/><path d="M1627.5 317V329" stroke="#000"/><path d="M1638.5 317V329" stroke="#000"/><path d="M1649.5 317V329" stroke="#000"/><path d="M1660.5 317V329" stroke="#000"/><path d="M1671.5 317V329" stroke="#000"/><path d="M1682.5 317V329" stroke="#000"/><rect x="1616" y="317" width="12" height="12" fill="#000"/><rect x="1638" y="317" width="12" height="12" fill="#000"/><rect x="1660" y="317" width="12" height="12" fill="#000"/><rect x="1682" y="317" width="12" height="12" fill="#000"/><rect x="1697.5" y="317.5" width="88" height="11" fill="#fff" stroke="#000"/><path d="M1708.5 317V329" stroke="#000"/><path d="M1719.5 317V329" stroke="#000"/><path d="M1730.5 317V329" stroke="#000"/><path d="M1741.5 317V329" stroke="#000"/><path d="M1752.5 317V329" stroke="#000"/><path d="M1763.5 317V329" stroke="#000"/><path d="M1774.5 317V329" stroke="#000"/><rect x="1708" y="317" width="12" height="12" fill="#000"/><rect x="1730" y="317" width="12" height="12" fill="#000"/><rect x="1752" y="317" width="12" height="12" fill="#000"/><rect x="1774" y="317" width="12" height="12" fill="#000"/><rect x="1053.5" y="349.5" width="88" height="11" fill="#fff" stroke="#000"/><path d="M1064.5 349V361" stroke="#000"/><path d="M1075.5 349V361" stroke="#000"/><path d="M1086.5 349V361" stroke="#000"/><path d="M1097.5 349V361" stroke="#000"/><path d="M1108.5 349V361" stroke="#000"/><path d="M1119.5 349V361" stroke="#000"/><path d="M1130.5 349V361" stroke="#000"/><rect x="1119" y="349" width="12" height="12" fill="#000"/><rect x="1130" y="349" width="12" height="12" fill="#000"/><rect x="1145.5" y="349.5" width="88" height="11" fill="#fff" stroke="#000"/><path d="M1156.5 349V361" stroke="#000"/><path d="M1167.5 349V361" stroke="#000"/><path d="M1178.5 349V361" stroke="#000"/><path d="M1189.5 349V361" stroke="#000"/><path d="M1200.5 349V361" stroke="#000"/><path d="M1211.5 349V361" stroke="#000"/><path d="M1222.5 349V361" stroke="#000"/><rect x="1167" y="349" width="12" height="12" fill="#000"/><rect x="1211" y="349" width="12" height="12" fill="#000"/><rect x="1237.5" y="349.5" width="88" height="11" fill="#fff" stroke="#000"/><path d="M1248.5 349V361" stroke="#000"/><path d="M1259.5 349V361" stroke="#000"/><path d="M1270.5 349V361" stroke="#000"/><path d="M1281.5 349V361" stroke="#000"/><path d="M1292.5 349V361" stroke="#000"/><path d="M1303.5 349V361" stroke="#000"/><path d="M1314.5 349V361" stroke="#000"/><rect x="1314" y="349" width="12" height="12" fill="#000"/><rect x="1329.5" y="349.5" width="88" height="11" fill="#fff" stroke="#000"/><path d="M1340.5 349V361" stroke="#000"/><path d="M1351.5 349V361" stroke="#000"/><path d="M1362.5 349V361" stroke="#000"/><path d="M1373.5 349V361" stroke="#000"/><path d="M1384.5 349V361" stroke="#000"/><path d="M1395.5 349V361" stroke="#000"/><path d="M1406.5 349V361" stroke="#000"/><rect x="1421.5" y="349.5" width="88" height="11" fill="#fff" stroke="#000"/><path d="M1432.5 349V361" stroke="#000"/><path d="M1443.5 349V361" stroke="#000"/><path d="M1454.5 349V361" stroke="#000"/><path d="M1465.5 349V361" stroke="#000"/><path d="M1476.5 349V361" stroke="#000"/><path d="M1487.5 349V361" stroke="#000"/><path d="M1498.5 349V361" stroke="#000"/><rect x="1432" y="349" width="12" height="12" fill="#000"/><rect x="1454" y="349" width="12" height="12" fill="#000"/><rect x="1476" y="349" width="12" height="12" fill="#000"/><rect x="1498" y="349" width="12" height="12" fill="#000"/><rect x="1513.5" y="349.5" width="88" height="11" fill="#fff" stroke="#000"/><path d="M1524.5 349V361" stroke="#000"/><path d="M1535.5 349V361" stroke="#000"/><path d="M1546.5 349V361" stroke="#000"/><path d="M1557.5 349V361" stroke="#000"/><path d="M1568.5 349V361" stroke="#000"/><path d="M1579.5 349V361" stroke="#000"/><path d="M1590.5 349V361" stroke="#000"/><rect x="1524" y="349" width="12" height="12" fill="#000"/><rect x="1546" y="349" width="12" height="12" fill="#000"/><rect x="1568" y="349" width="12" height="12" fill="#000"/><rect x="1590" y="349" width="12" height="12" fill="#000"/><rect x="1605.5" y="349.5" width="88" height="11" fill="#fff" stroke="#000"/><path d="M1616.5 349V361" stroke="#000"/><path d="M1627.5 349V361" stroke="#000"/><path d="M1638.5 349V361" stroke="#000"/><path d="M1649.5 349V361" stroke="#000"/><path d="M1660.5 349V361" stroke="#000"/><path d="M1671.5 349V361" stroke="#000"/><path d="M1682.5 349V361" stroke="#000"/><rect x="1616" y="349" width="12" height="12" fill="#000"/><rect x="1638" y="349" width="12" height="12" fill="#000"/><rect x="1660" y="349" width="12" height="12" fill="#000"/><rect x="1682" y="349" width="12" height="12" fill="#000"/><rect x="1697.5" y="349.5" width="88" height="11" fill="#fff" stroke="#000"/><path d="M1708.5 349V361" stroke="#000"/><path d="M1719.5 349V361" stroke="#000"/><path d="M1730.5 349V361" stroke="#000"/><path d="M1741.5 349V361" stroke="#000"/><path d="M1752.5 349V361" stroke="#000"/><path d="M1763.5 349V361" stroke="#000"/><path d="M1774.5 349V361" stroke="#000"/><rect x="1708" y="349" width="12" height="12" fill="#000"/><rect x="1730" y="349" width="12" height="12" fill="#000"/><rect x="1752" y="349" width="12" height="12" fill="#000"/><rect x="1774" y="349" width="12" height="12" fill="#000"/><rect x="1053.5" y="381.5" width="88" height="11" fill="#fff" stroke="#000"/><path d="M1064.5 381V393" stroke="#000"/><path d="M1075.5 381V393" stroke="#000"/><path d="M1086.5 381V393" stroke="#000"/><path d="M1097.5 381V393" stroke="#000"/><path d="M1108.5 381V393" stroke="#000"/><path d="M1119.5 381V393" stroke="#000"/><path d="M1130.5 381V393" stroke="#000"/><rect x="1108" y="381" width="12" height="12" fill="#000"/><rect x="1145.5" y="381.5" width="88" height="11" fill="#fff" stroke="#000"/><path d="M1156.5 381V393" stroke="#000"/><path d="M1167.5 381V393" stroke="#000"/><path d="M1178.5 381V393" stroke="#000"/><path d="M1189.5 381V393" stroke="#000"/><path d="M1200.5 381V393" stroke="#000"/><path d="M1211.5 381V393" stroke="#000"/><path d="M1222.5 381V393" stroke="#000"/><rect x="1156" y="381" width="12" height="12" fill="#000"/><rect x="1167" y="381" width="12" height="12" fill="#000"/><rect x="1211" y="381" width="12" height="12" fill="#000"/><rect x="1237.5" y="381.5" width="88" height="11" fill="#fff" stroke="#000"/><path d="M1248.5 381V393" stroke="#000"/><path d="M1259.5 381V393" stroke="#000"/><path d="M1270.5 381V393" stroke="#000"/><path d="M1281.5 381V393" stroke="#000"/><path d="M1292.5 381V393" stroke="#000"/><path d="M1303.5 381V393" stroke="#000"/><path d="M1314.5 381V393" stroke="#000"/><rect x="1314" y="381" width="12" height="12" fill="#000"/><rect x="1329.5" y="381.5" width="88" height="11" fill="#fff" stroke="#000"/><path d="M1340.5 381V393" stroke="#000"/><path d="M1351.5 381V393" stroke="#000"/><path d="M1362.5 381V393" stroke="#000"/><path d="M1373.5 381V393" stroke="#000"/><path d="M1384.5 381V393" stroke="#000"/><path d="M1395.5 381V393" stroke="#000"/><path d="M1406.5 381V393" stroke="#000"/><rect x="1421.5" y="381.5" width="88" height="11" fill="#fff" stroke="#000"/><path d="M1432.5 381V393" stroke="#000"/><path d="M1443.5 381V393" stroke="#000"/><path d="M1454.5 381V393" stroke="#000"/><path d="M1465.5 381V393" stroke="#000"/><path d="M1476.5 381V393" stroke="#000"/><path d="M1487.5 381V393" stroke="#000"/><path d="M1498.5 381V393" stroke="#000"/><rect x="1421" y="381" width="12" height="12" fill="#000"/><rect x="1513.5" y="381.5" width="88" height="11" fill="#fff" stroke="#000"/><path d="M1524.5 381V393" stroke="#000"/><path d="M1535.5 381V393" stroke="#000"/><path d="M1546.5 381V393" stroke="#000"/><path d="M1557.5 381V393" stroke="#000"/><path d="M1568.5 381V393" stroke="#000"/><path d="M1579.5 381V393" stroke="#000"/><path d="M1590.5 381V393" stroke="#000"/><rect x="1513" y="381" width="12" height="12" fill="#000"/><rect x="1535" y="381" width="12" height="12" fill="#000"/><rect x="1557" y="381" width="12" height="12" fill="#000"/><rect x="1579" y="381" width="12" height="12" fill="#000"/><rect x="1605.5" y="381.5" width="88" height="11" fill="#fff" stroke="#000"/><path d="M1616.5 381V393" stroke="#000"/><path d="M1627.5 381V393" stroke="#000"/><path d="M1638.5 381V393" stroke="#000"/><path d="M1649.5 381V393" stroke="#000"/><path d="M1660.5 381V393" stroke="#000"/><path d="M1671.5 381V393" stroke="#000"/><path d="M1682.5 381V393" stroke="#000"/><rect x="1605" y="381" width="12" height="12" fill="#000"/><rect x="1627" y="381" width="12" height="12" fill="#000"/><rect x="1649" y="381" width="12" height="12" fill="#000"/><rect x="1671" y="381" width="12" height="12" fill="#000"/><rect x="1697.5" y="381.5" width="88" height="11" fill="#fff" stroke="#000"/><path d="M1708.5 381V393" stroke="#000"/><path d="M1719.5 381V393" stroke="#000"/><path d="M1730.5 381V393" stroke="#000"/><path d="M1741.5 381V393" stroke="#000"/><path d="M1752.5 381V393" stroke="#000"/><path d="M1763.5 381V393" stroke="#000"/><path d="M1774.5 381V393" stroke="#000"/><rect x="1697" y="381" width="12" height="12" fill="#000"/><rect x="1719" y="381" width="12" height="12" fill="#000"/><rect x="1741" y="381" width="12" height="12" fill="#000"/><rect x="1763" y="381" width="12" height="12" fill="#000"/><rect x="1053.5" y="413.5" width="88" height="11" fill="#fff" stroke="#000"/><path d="M1064.5 413V425" stroke="#000"/><path d="M1075.5 413V425" stroke="#000"/><path d="M1086.5 413V425" stroke="#000"/><path d="M1097.5 413V425" stroke="#000"/><path d="M1108.5 413V425" stroke="#000"/><path d="M1119.5 413V425" stroke="#000"/><path d="M1130.5 413V425" stroke="#000"/><rect x="1145.5" y="413.5" width="88" height="11" fill="#fff" stroke="#000"/><path d="M1156.5 413V425" stroke="#000"/><path d="M1167.5 413V425" stroke="#000"/><path d="M1178.5 413V425" stroke="#000"/><path d="M1189.5 413V425" stroke="#000"/><path d="M1200.5 413V425" stroke="#000"/><path d="M1211.5 413V425" stroke="#000"/><path d="M1222.5 413V425" stroke="#000"/><rect x="1237.5" y="413.5" width="88" height="11" fill="#fff" stroke="#000"/><path d="M1248.5 413V425" stroke="#000"/><path d="M1259.5 413V425" stroke="#000"/><path d="M1270.5 413V425" stroke="#000"/><path d="M1281.5 413V425" stroke="#000"/><path d="M1292.5 413V425" stroke="#000"/><path d="M1303.5 413V425" stroke="#000"/><path d="M1314.5 413V425" stroke="#000"/><rect x="1281" y="413" width="12" height="12" fill="#000"/><rect x="1329.5" y="413.5" width="88" height="11" fill="#fff" stroke="#000"/><path d="M1340.5 413V425" stroke="#000"/><path d="M1351.5 413V425" stroke="#000"/><path d="M1362.5 413V425" stroke="#000"/><path d="M1373.5 413V425" stroke="#000"/><path d="M1384.5 413V425" stroke="#000"/><path d="M1395.5 413V425" stroke="#000"/><path d="M1406.5 413V425" stroke="#000"/><rect x="1340" y="413" width="12" height="12" fill="#000"/><rect x="1351" y="413" width="12" height="12" fill="#000"/><rect x="1395" y="413" width="12" height="12" fill="#000"/><rect x="1421.5" y="413.5" width="88" height="11" fill="#fff" stroke="#000"/><path d="M1432.5 413V425" stroke="#000"/><path d="M1443.5 413V425" stroke="#000"/><path d="M1454.5 413V425" stroke="#000"/><path d="M1465.5 413V425" stroke="#000"/><path d="M1476.5 413V425" stroke="#000"/><path d="M1487.5 413V425" stroke="#000"/><path d="M1498.5 413V425" stroke="#000"/><rect x="1513.5" y="413.5" width="88" height="11" fill="#fff" stroke="#000"/><path d="M1524.5 413V425" stroke="#000"/><path d="M1535.5 413V425" stroke="#000"/><path d="M1546.5 413V425" stroke="#000"/><path d="M1557.5 413V425" stroke="#000"/><path d="M1568.5 413V425" stroke="#000"/><path d="M1579.5 413V425" stroke="#000"/><path d="M1590.5 413V425" stroke="#000"/><rect x="1605.5" y="413.5" width="88" height="11" fill="#fff" stroke="#000"/><path d="M1616.5 413V425" stroke="#000"/><path d="M1627.5 413V425" stroke="#000"/><path d="M1638.5 413V425" stroke="#000"/><path d="M1649.5 413V425" stroke="#000"/><path d="M1660.5 413V425" stroke="#000"/><path d="M1671.5 413V425" stroke="#000"/><path d="M1682.5 413V425" stroke="#000"/><rect x="1605" y="413" width="12" height="12" fill="#000"/><rect x="1638" y="413" width="12" height="12" fill="#000"/><rect x="1660" y="413" width="12" height="12" fill="#000"/><rect x="1671" y="413" width="12" height="12" fill="#000"/><rect x="1682" y="413" width="12" height="12" fill="#000"/><rect x="1697.5" y="413.5" width="88" height="11" fill="#fff" stroke="#000"/><path d="M1708.5 413V425" stroke="#000"/><path d="M1719.5 413V425" stroke="#000"/><path d="M1730.5 413V425" stroke="#000"/><path d="M1741.5 413V425" stroke="#000"/><path d="M1752.5 413V425" stroke="#000"/><path d="M1763.5 413V425" stroke="#000"/><path d="M1774.5 413V425" stroke="#000"/><rect x="1697" y="413" width="12" height="12" fill="#000"/><rect x="1708" y="413" width="12" height="12" fill="#000"/><rect x="1719" y="413" width="12" height="12" fill="#000"/><rect x="1741" y="413" width="12" height="12" fill="#000"/><rect x="1774" y="413" width="12" height="12" fill="#000"/><rect x="1053.5" y="445.5" width="88" height="11" fill="#fff" stroke="#000"/><path d="M1064.5 445V457" stroke="#000"/><path d="M1075.5 445V457" stroke="#000"/><path d="M1086.5 445V457" stroke="#000"/><path d="M1097.5 445V457" stroke="#000"/><path d="M1108.5 445V457" stroke="#000"/><path d="M1119.5 445V457" stroke="#000"/><path d="M1130.5 445V457" stroke="#000"/><rect x="1145.5" y="445.5" width="88" height="11" fill="#fff" stroke="#000"/><path d="M1156.5 445V457" stroke="#000"/><path d="M1167.5 445V457" stroke="#000"/><path d="M1178.5 445V457" stroke="#000"/><path d="M1189.5 445V457" stroke="#000"/><path d="M1200.5 445V457" stroke="#000"/><path d="M1211.5 445V457" stroke="#000"/><path d="M1222.5 445V457" stroke="#000"/><rect x="1237.5" y="445.5" width="88" height="11" fill="#fff" stroke="#000"/><path d="M1248.5 445V457" stroke="#000"/><path d="M1259.5 445V457" stroke="#000"/><path d="M1270.5 445V457" stroke="#000"/><path d="M1281.5 445V457" stroke="#000"/><path d="M1292.5 445V457" stroke="#000"/><path d="M1303.5 445V457" stroke="#000"/><path d="M1314.5 445V457" stroke="#000"/><rect x="1329.5" y="445.5" width="88" height="11" fill="#fff" stroke="#000"/><path d="M1340.5 445V457" stroke="#000"/><path d="M1351.5 445V457" stroke="#000"/><path d="M1362.5 445V457" stroke="#000"/><path d="M1373.5 445V457" stroke="#000"/><path d="M1384.5 445V457" stroke="#000"/><path d="M1395.5 445V457" stroke="#000"/><path d="M1406.5 445V457" stroke="#000"/><rect x="1421.5" y="445.5" width="88" height="11" fill="#fff" stroke="#000"/><path d="M1432.5 445V457" stroke="#000"/><path d="M1443.5 445V457" stroke="#000"/><path d="M1454.5 445V457" stroke="#000"/><path d="M1465.5 445V457" stroke="#000"/><path d="M1476.5 445V457" stroke="#000"/><path d="M1487.5 445V457" stroke="#000"/><path d="M1498.5 445V457" stroke="#000"/><rect x="1513.5" y="445.5" width="88" height="11" fill="#fff" stroke="#000"/><path d="M1524.5 445V457" stroke="#000"/><path d="M1535.5 445V457" stroke="#000"/><path d="M1546.5 445V457" stroke="#000"/><path d="M1557.5 445V457" stroke="#000"/><path d="M1568.5 445V457" stroke="#000"/><path d="M1579.5 445V457" stroke="#000"/><path d="M1590.5 445V457" stroke="#000"/><rect x="1605.5" y="445.5" width="88" height="11" fill="#fff" stroke="#000"/><path d="M1616.5 445V457" stroke="#000"/><path d="M1627.5 445V457" stroke="#000"/><path d="M1638.5 445V457" stroke="#000"/><path d="M1649.5 445V457" stroke="#000"/><path d="M1660.5 445V457" stroke="#000"/><path d="M1671.5 445V457" stroke="#000"/><path d="M1682.5 445V457" stroke="#000"/><rect x="1697.5" y="445.5" width="88" height="11" fill="#fff" stroke="#000"/><path d="M1708.5 445V457" stroke="#000"/><path d="M1719.5 445V457" stroke="#000"/><path d="M1730.5 445V457" stroke="#000"/><path d="M1741.5 445V457" stroke="#000"/><path d="M1752.5 445V457" stroke="#000"/><path d="M1763.5 445V457" stroke="#000"/><path d="M1774.5 445V457" stroke="#000"/></svg>
<div class="r" style="left:814px;top:924px;width:978px;height:19px;background:#f0f0f0"></div>
<div class="r" style="left:835px;top:924px;width:900px;height:19px;background:#cdcdcd"></div>
<svg style="left:819px;top:929px" width="9" height="10"><path d="M6.5 1L2 5L6.5 9" fill="none" stroke="#555" stroke-width="2.2"/></svg>
<svg style="left:1777px;top:929px" width="9" height="10"><path d="M2.5 1L7 5L2.5 9" fill="none" stroke="#555" stroke-width="2.2"/></svg>
<div class="r" style="left:1801px;top:160px;width:130px;height:25px;background:#e1e1e1;border:1px solid #adadad"></div>
<div class="t" style="left:1858.71px;top:166.00px;font-size:12px;line-height:14px;color:#000;letter-spacing:0.313px;">Notch</div>
<div class="r" style="left:1801px;top:195px;width:130px;height:25px;background:#e1e1e1;border:1px solid #adadad"></div>
<div class="t" style="left:1851.76px;top:201.00px;font-size:12px;line-height:14px;color:#000;letter-spacing:0.298px;">Unnotch</div>
<div class="r" style="left:1800px;top:230px;width:16px;height:16px;background:#fff;border:1px solid #333"></div>
<div class="t" style="left:1822.50px;top:232.00px;font-size:12.4px;line-height:14px;color:#000;letter-spacing:0.245px;">Mute notched bits</div>
<div class="t" style="left:1835.22px;top:257.00px;font-size:12.4px;line-height:14px;color:#000;letter-spacing:0.235px;">Notch Interval</div>
<div class="r" style="left:1800px;top:278px;width:130px;height:24px;background:#fff;border:1px solid #7a7a7a"></div>
<div class="t" style="left:1803.00px;top:284.00px;font-size:12.4px;line-height:14px;color:#000;letter-spacing:0.372px;">750ms</div>
<div class="r" style="left:1800px;top:309px;width:130px;height:16px;background:#0000ff"></div>
<div class="r" style="left:1800px;top:333px;width:130px;height:2px;background:#000"></div>
<div class="t" style="left:1833.80px;top:346.00px;font-size:12.4px;line-height:14px;color:#000;letter-spacing:0.226px;">Expire Interval</div>
<div class="r" style="left:1800px;top:366px;width:130px;height:24px;background:#fff;border:1px solid #7a7a7a"></div>
<div class="t" style="left:1803.00px;top:372.00px;font-size:12.4px;line-height:14px;color:#000;letter-spacing:0.353px;">5000ms</div>
<div class="r" style="left:1800px;top:399px;width:16px;height:16px;background:#fff;border:1px solid #333"></div>
<div class="t" style="left:1822.50px;top:401.00px;font-size:12.4px;line-height:14px;color:#000;letter-spacing:0.250px;">Never Expire IDs</div>
<div class="r" style="left:1800px;top:425px;width:130px;height:2px;background:#000"></div>
<div class="r" style="left:1800px;top:437px;width:16px;height:16px;background:#fff;border:1px solid #333"></div>
<div class="t" style="left:1822.50px;top:439.00px;font-size:12.4px;line-height:14px;color:#000;letter-spacing:0.237px;">Fade inactive bytes</div>
<div class="r" style="left:1800px;top:464px;width:16px;height:16px;background:#fff;border:1px solid #333"></div>
<svg style="left:1802px;top:467px" width="12" height="10"><path d="M1 5L4.5 8.5L11 1.5" fill="none" stroke="#333" stroke-width="1.5"/></svg>
<div class="t" style="left:1822.50px;top:465.00px;font-size:12.4px;line-height:14px;color:#000;letter-spacing:0.254px;">View Bits</div>
<div class="r" style="left:1800px;top:523px;width:130px;height:421px;border:1px solid #dcdcdc"></div>
<div class="r" style="left:1807px;top:515px;width:44px;height:14px;background:#f0f0f0"></div>
<div class="t" style="left:1810.40px;top:516.00px;font-size:12.4px;line-height:14px;color:#000;letter-spacing:0.213px;">Filters:</div>
<div class="r" style="left:1812px;top:542px;width:120px;height:356px;background:#fff;border:1px solid #7a8594"></div>
<div class="r" style="left:1817px;top:545px;width:16px;height:16px;background:#fff;border:1px solid #333"></div>
<svg style="left:1819px;top:548px" width="12" height="10"><path d="M1 5L4.5 8.5L11 1.5" fill="none" stroke="#333" stroke-width="1.5"/></svg>
<div class="t" style="left:1839.20px;top:547.00px;font-size:12.4px;line-height:14px;color:#000;letter-spacing:-0.081px;">0x1000</div>
<div class="r" style="left:1817px;top:563px;width:16px;height:16px;background:#fff;border:1px solid #333"></div>
<svg style="left:1819px;top:566px" width="12" height="10"><path d="M1 5L4.5 8.5L11 1.5" fill="none" stroke="#333" stroke-width="1.5"/></svg>
<div class="t" style="left:1839.20px;top:565.00px;font-size:12.4px;line-height:14px;color:#000;letter-spacing:-0.081px;">0x1001</div>
<div class="r" style="left:1817px;top:581px;width:16px;height:16px;background:#fff;border:1px solid #333"></div>
<svg style="left:1819px;top:584px" width="12" height="10"><path d="M1 5L4.5 8.5L11 1.5" fill="none" stroke="#333" stroke-width="1.5"/></svg>
<div class="t" style="left:1839.20px;top:583.00px;font-size:12.4px;line-height:14px;color:#000;letter-spacing:-0.084px;">0x594</div>
<div class="r" style="left:1817px;top:599px;width:16px;height:16px;background:#fff;border:1px solid #333"></div>
<svg style="left:1819px;top:602px" width="12" height="10"><path d="M1 5L4.5 8.5L11 1.5" fill="none" stroke="#333" stroke-width="1.5"/></svg>
<div class="t" style="left:1839.20px;top:601.00px;font-size:12.4px;line-height:14px;color:#000;letter-spacing:-0.095px;">0x5CC</div>
<div class="r" style="left:1817px;top:617px;width:16px;height:16px;background:#fff;border:1px solid #333"></div>
<svg style="left:1819px;top:620px" width="12" height="10"><path d="M1 5L4.5 8.5L11 1.5" fill="none" stroke="#333" stroke-width="1.5"/></svg>
<div class="t" style="left:1839.20px;top:619.00px;font-size:12.4px;line-height:14px;color:#000;letter-spacing:-0.091px;">0x5FC</div>
<div class="r" style="left:1817px;top:635px;width:16px;height:16px;background:#fff;border:1px solid #333"></div>
<svg style="left:1819px;top:638px" width="12" height="10"><path d="M1 5L4.5 8.5L11 1.5" fill="none" stroke="#333" stroke-width="1.5"/></svg>
<div class="t" style="left:1839.20px;top:637.00px;font-size:12.4px;line-height:14px;color:#000;letter-spacing:-0.090px;">0x6C0</div>
<div class="r" style="left:1817px;top:653px;width:16px;height:16px;background:#fff;border:1px solid #333"></div>
<svg style="left:1819px;top:656px" width="12" height="10"><path d="M1 5L4.5 8.5L11 1.5" fill="none" stroke="#333" stroke-width="1.5"/></svg>
<div class="t" style="left:1839.20px;top:655.00px;font-size:12.4px;line-height:14px;color:#000;letter-spacing:-0.084px;">0x700</div>
<div class="r" style="left:1817px;top:671px;width:16px;height:16px;background:#fff;border:1px solid #333"></div>
<svg style="left:1819px;top:674px" width="12" height="10"><path d="M1 5L4.5 8.5L11 1.5" fill="none" stroke="#333" stroke-width="1.5"/></svg>
<div class="t" style="left:1839.20px;top:673.00px;font-size:12.4px;line-height:14px;color:#000;letter-spacing:-0.084px;">0x744</div>
<div class="r" style="left:1817px;top:689px;width:16px;height:16px;background:#fff;border:1px solid #333"></div>
<svg style="left:1819px;top:692px" width="12" height="10"><path d="M1 5L4.5 8.5L11 1.5" fill="none" stroke="#333" stroke-width="1.5"/></svg>
<div class="t" style="left:1839.20px;top:691.00px;font-size:12.4px;line-height:14px;color:#000;letter-spacing:-0.091px;">0x7AE</div>
<div class="r" style="left:1813px;top:906px;width:58px;height:26px;background:#e1e1e1;border:1px solid #adadad"></div>
<div class="t" style="left:1834.84px;top:913.00px;font-size:12.4px;line-height:14px;color:#000;letter-spacing:0.275px;">All</div>
<div class="r" style="left:1880px;top:906px;width:60px;height:26px;background:#e1e1e1;border:1px solid #adadad"></div>
<div class="t" style="left:1894.50px;top:913.00px;font-size:12.4px;line-height:14px;color:#000;letter-spacing:0.395px;">None</div>
<div class="r" style="left:3px;top:0px;width:797px;height:572px;background:#fff;border:1px solid #6b6b6b;border-right:2px solid #585858;box-shadow:2px 3px 12px rgba(0,0,0,0.35)"></div>
<div class="r" style="left:4px;top:33px;width:794px;height:538px;background:#d0dfdf"></div>
<div class="r" style="left:790px;top:33px;width:8px;height:538px;background:linear-gradient(90deg,#a8b8b8,#c6d4d4)"></div>
<svg style="left:9px;top:5px" width="20" height="22"><g transform="rotate(25 9 6.5)"><rect x="1" y="2" width="16" height="9" rx="3.5" fill="#fff" stroke="#aaa" stroke-width="0.9"/><text x="2.2" y="9.4" font-family="Liberation Sans" font-size="6.6" font-weight="bold" font-style="italic" fill="#1f5a9a" letter-spacing="-0.4">VCDS</text></g><text x="6.5" y="20.5" font-family="Liberation Sans" font-size="6.5" font-weight="bold" fill="#000">x64</text></svg>
<div class="t" style="left:33.30px;top:8.00px;font-size:16px;line-height:17px;color:#9a9a9a;transform:scaleX(0.8848);transform-origin:0 0;">VCDS Release 24.5.0: C6-Batt. Chrg.,  Open Controller</div>
<svg style="left:770px;top:11px" width="12" height="12"><path d="M0.5 0.5L11.5 11.5M11.5 0.5L0.5 11.5" stroke="#8a8a8a" stroke-width="1"/></svg>
<div class="r" style="left:12px;top:28px;width:778px;height:544px;background:#d0dfdf;border:1px solid #666"></div>
<div class="r" style="left:13px;top:29px;width:776px;height:32px;background:#fff"></div>
<div class="t" style="left:17.20px;top:36.00px;font-size:16px;line-height:17px;color:#000;transform:scaleX(0.8757);transform-origin:0 0;">VCDS Release 24.5.0: C6-Batt. Chrg.,  Output Tests</div>
<svg style="left:762px;top:39px" width="12" height="12"><path d="M0.5 0.5L11.5 11.5M11.5 0.5L0.5 11.5" stroke="#000" stroke-width="1.1"/></svg>
<div class="r" style="left:36px;top:79px;width:730px;height:29px;background:#e1e1e1;border:1px solid #b5b7b7"></div>
<div class="t" style="left:40.30px;top:84.00px;font-size:18px;line-height:20px;color:#111;transform:scaleX(0.9026);transform-origin:0 0;">MAS07565-Activation charge cover lock charge socket A</div>
<svg style="left:749px;top:91px" width="12" height="7"><path d="M1 1L5.5 5.5L10 1" fill="none" stroke="#666" stroke-width="1.4"/></svg>
<div class="r" style="left:33px;top:116px;width:732px;height:30px;background:#fff;border-top:1px solid #a6a6a6;border-left:1px solid #a6a6a6"></div>
<div class="t" style="left:323.00px;top:121.00px;font-size:18px;line-height:20px;color:#12871b;font-weight:bold;transform:scaleX(1.0022);transform-origin:0 0;">Finished-Timeout</div>
<div class="r" style="left:33px;top:153px;width:142px;height:33px;background:#fff;border-top:1px solid #a6a6a6;border-left:1px solid #a6a6a6"></div>
<div class="r" style="left:229px;top:153px;width:143px;height:33px;background:#fff;border-top:1px solid #a6a6a6;border-left:1px solid #a6a6a6"></div>
<div class="r" style="left:426px;top:153px;width:143px;height:33px;background:#fff;border-top:1px solid #a6a6a6;border-left:1px solid #a6a6a6"></div>
<div class="r" style="left:622px;top:153px;width:143px;height:33px;background:#fff;border-top:1px solid #a6a6a6;border-left:1px solid #a6a6a6"></div>
<div class="r" style="left:18px;top:226px;width:367px;height:60px;border:1px solid #dcdcd8"></div>
<div class="r" style="left:398px;top:226px;width:368px;height:60px;border:1px solid #dcdcd8"></div>
<div class="r" style="left:26px;top:218px;width:111px;height:12px;background:#d0dfdf"></div>
<div class="r" style="left:405px;top:218px;width:120px;height:12px;background:#d0dfdf"></div>
<div class="t" style="left:29.20px;top:216.00px;font-size:18px;line-height:20px;color:#111;transform:scaleX(0.9120);transform-origin:0 0;">Actuation time</div>
<div class="t" style="left:409.70px;top:216.00px;font-size:18px;line-height:20px;color:#111;transform:scaleX(0.8929);transform-origin:0 0;">Start parameter</div>
<div class="r" style="left:27px;top:246px;width:352px;height:30px;background:#fff;border:1px solid #cfcfcf"></div>
<div class="r" style="left:30px;top:250px;width:325px;height:22px;background:#d0dfdf"></div>
<div class="t" style="left:31.40px;top:250.00px;font-size:18px;line-height:20px;color:#8d8d8d;transform:scaleX(0.8812);transform-origin:0 0;">1 second</div>
<svg style="left:361px;top:258px" width="12" height="7"><path d="M1 1L6 6L11 1" fill="none" stroke="#9a9a9a" stroke-width="1.1"/></svg>
<div class="r" style="left:407px;top:246px;width:349px;height:30px;background:#fff;border:1px solid #cfcfcf"></div>
<div class="r" style="left:410px;top:250px;width:321px;height:22px;background:#d0dfdf"></div>
<div class="r" style="left:410px;top:250px;width:49px;height:20px;background:#0078d7"></div>
<div class="t" style="left:410.50px;top:250.00px;font-size:18px;line-height:20px;color:#7a8fa8;transform:scaleX(0.9173);transform-origin:0 0;">unlock</div>
<svg style="left:738px;top:258px" width="12" height="7"><path d="M1 1L6 6L11 1" fill="none" stroke="#9a9a9a" stroke-width="1.1"/></svg>
<div class="r" style="left:38px;top:533px;width:152px;height:34px;background:#e1e1e1;border:1px solid #adadad"></div>
<div class="t" style="left:49.10px;top:540.00px;font-size:18px;line-height:20px;color:#111;transform:scaleX(0.8981);transform-origin:0 0;">Measuring Values</div>
<div class="r" style="left:325px;top:533px;width:152px;height:33px;background:#e5f1fb;border:2px solid #0078d7"></div>
<div class="t" style="left:384.00px;top:540.00px;font-size:18px;line-height:20px;color:#111;transform:scaleX(0.9192);transform-origin:0 0;">Stop</div>
<div class="r" style="left:613px;top:533px;width:152px;height:34px;background:#e1e1e1;border:1px solid #adadad"></div>
<div class="t" style="left:634.00px;top:540.00px;font-size:18px;line-height:20px;color:#111;transform:scaleX(0.9113);transform-origin:0 0;">Done, Go Back</div>
<div class="r" style="left:0px;top:1030px;width:1920px;height:50px;background:#d6e4ec"></div>
<div class="r" style="left:1340px;top:1030px;width:220px;height:50px;background:radial-gradient(ellipse 90px 60px at 50% 50%,#dfe3e3,rgba(214,228,236,0))"></div>
<svg style="left:20px;top:1044px" width="21" height="21"><path d="M0 3L8.5 1.8V9.8H0Z M9.8 1.6L20.5 0V9.8H9.8Z M0 11H8.5V19.2L0 18Z M9.8 11H20.5V21L9.8 19.4Z" fill="#000"/></svg>
<div class="r" style="left:60px;top:1030px;width:360px;height:50px;background:#fff;border:1px solid #c8c8c8"></div>
<svg style="left:74px;top:1044px" width="22" height="22"><circle cx="13" cy="9" r="7.2" fill="none" stroke="#222" stroke-width="1.6"/><path d="M8 14L1.5 20.5" stroke="#222" stroke-width="1.8"/></svg>
<div class="t" style="left:110.50px;top:1045.00px;font-size:19px;line-height:21px;color:#222;letter-spacing:-0.006px;">Taper ici pour rechercher</div>
<svg style="left:439px;top:1044px" width="24" height="22"><path d="M2 1.5H15M2 20.5H15M4 5H13V17H4Z M20 0V3M20 8V14M20 19V22" fill="none" stroke="#111" stroke-width="1.5"/><rect x="18.5" y="5" width="3" height="3" fill="#111"/></svg>
<div class="r" style="left:486px;top:1044px;width:1.5px;height:22px;background:#222"></div>
<div class="r" style="left:490px;top:1044px;width:1.5px;height:22px;background:#222"></div>
<svg style="left:518px;top:1040px" width="31" height="30"><path d="M9 6V3Q9 1 11 1H20Q22 1 22 3V6" fill="none" stroke="#3aa0e8" stroke-width="2"/><rect x="1" y="6" width="29" height="23" rx="4" fill="#1c4e8a"/><rect x="10" y="11" width="5" height="5" fill="#f25022"/><rect x="16" y="11" width="5" height="5" fill="#7fba00"/><rect x="10" y="17" width="5" height="5" fill="#00a4ef"/><rect x="16" y="17" width="5" height="5" fill="#ffb900"/></svg>
<svg style="left:581px;top:1040px" width="30" height="30" viewBox="0 0 30 30"><defs><linearGradient id="ge1" x1="0" y1="0" x2="1" y2="0.6"><stop offset="0" stop-color="#3ab4f0"/><stop offset="0.5" stop-color="#2ec6c8"/><stop offset="1" stop-color="#5ee05a"/></linearGradient><linearGradient id="ge2" x1="0" y1="0" x2="0" y2="1"><stop offset="0" stop-color="#1a90e0"/><stop offset="1" stop-color="#0b6cc8"/></linearGradient></defs><path d="M0.5 15A14.5 14.5 0 0 1 29.5 14.5Q29.8 19.5 26 20.2Q21 21.5 17.5 19Q19.5 16 18 13Q16 10 12 11Q6 13 6.5 20Q7.5 27 17 29.5Q4 30 1 20Q0.5 17 0.5 15Z" fill="url(#ge1)"/><path d="M0.6 13.5Q3 8 10 7.2Q16 7 19 11Q15 9 11.5 11Q7.5 13.5 8 19Q8.5 26 16 29.7Q3.5 29 0.8 18Z" fill="url(#ge2)"/><path d="M8.7 17Q9 12 13 11.5Q10.5 15 12 19Q14.5 24 21 24.5Q25.5 24.5 28.5 22.5Q26 28 19 29.5Q13 30 10.5 26.5Q8.3 22.5 8.7 17Z" fill="#10559e"/></svg>
<svg style="left:644px;top:1043px" width="28" height="23"><path d="M0 1.5Q0 0 1.5 0H11.5L13.5 2V5H0Z" fill="#e2a30a"/><rect x="0" y="2" width="27.3" height="20.5" rx="1.2" fill="#ffd566"/><path d="M5 22.6V15Q5 12 8 12H20Q23 12 23 15V22.6H18.5V16H9.5V22.6Z" fill="#3a90e0"/></svg>
<svg style="left:705px;top:1041px" width="30" height="28"><path d="M0 8.5L15 0L30 8.5V28H0Z" fill="#0a5cb0"/><path d="M0 8.5H30V28H0Z" fill="#22a4e6"/><path d="M30 8.5V28H26L15 19Z" fill="#3cc6f2"/><path d="M2.5 9H27.5L15 18Z" fill="#f2f2f2"/><path d="M0 28H30L15 17Z" fill="#1e98e0" opacity="0.6"/></svg>
<div class="r" style="left:752px;top:1030px;width:61px;height:50px;background:#e9f0f3"></div>
<svg style="left:769px;top:1039px" width="30" height="32"><g transform="rotate(20 13 10)"><rect x="0.5" y="3.5" width="25" height="12" rx="5.5" fill="#fff" stroke="#8a8a8a" stroke-width="1.1"/><text x="2.6" y="13" font-family="Liberation Sans" font-size="8" font-weight="bold" font-style="italic" fill="#1f4f8f" letter-spacing="-0.3">VCDS</text></g><text x="9" y="29.5" font-family="Liberation Sans" font-size="9.5" font-weight="bold" fill="#111">x64</text></svg>
<svg style="left:830px;top:1044px" width="28" height="22"><rect x="0.5" y="0.5" width="27" height="21" fill="#f4f4f4" stroke="#999"/><rect x="1" y="1" width="26" height="2" fill="#a8a8a8"/><rect x="7" y="4" width="11" height="14" fill="#1a78dc"/><path d="M19.5 6H26M19.5 8.5H26M19.5 11H26M19.5 13.5H26M2 6H5M2 8.5H5M2 11H5" stroke="#9a9a9a" stroke-width="1.2"/></svg>
<svg style="left:891px;top:1041px" width="29" height="27" viewBox="0 0 29 27"><defs><linearGradient id="gn" x1="0" y1="0" x2="0.3" y2="1"><stop offset="0" stop-color="#bfe6f5"/><stop offset="1" stop-color="#3aa0c0"/></linearGradient></defs><path d="M27 3L28 20L22 26Z" fill="#c8a060"/><path d="M25 3L27 21L21 26L15 23Z" fill="#f4f4f4" stroke="#bbb" stroke-width="0.6"/><path d="M10 2L25 3L21 25L0.5 20Z" fill="url(#gn)"/><path d="M10.5 1.5L25 2.5" stroke="#777" stroke-width="1.6" stroke-dasharray="1.2 1"/></svg>
<div class="r" style="left:571px;top:1077px;width:51px;height:3px;background:#3c9af2"></div>
<div class="r" style="left:633px;top:1077px;width:51px;height:3px;background:#3c9af2"></div>
<div class="r" style="left:752px;top:1077px;width:61px;height:3px;background:#3c9af2"></div>
<div class="r" style="left:819px;top:1077px;width:41px;height:3px;background:#3c9af2"></div>
<div class="r" style="left:881px;top:1077px;width:51px;height:3px;background:#3c9af2"></div>
<div class="r" style="left:860px;top:1077px;width:10px;height:3px;background:#92c4f6"></div>
<svg style="left:1548px;top:1042px" width="30" height="30"><circle cx="13" cy="13" r="12" fill="#1e90d8" stroke="#fff" stroke-width="1.5"/><text x="7.5" y="20" font-family="Liberation Sans" font-size="18" font-weight="bold" fill="#fff">?</text><circle cx="22" cy="22" r="6" fill="#f5a623" stroke="#fff" stroke-width="1"/><rect x="21" y="20" width="2" height="6" fill="#fff"/><rect x="21" y="17.5" width="2" height="1.6" fill="#fff"/></svg>
<svg style="left:1588px;top:1047px" width="18" height="12"><path d="M1 10L8.5 2L16 10" fill="none" stroke="#111" stroke-width="1.5"/></svg>
<svg style="left:1616px;top:1046px" width="22" height="14"><path d="M4 13Q0 13 0.8 9.5Q1.5 7 4.5 7.2Q6 2 11 2Q16 2 17 6.5Q21 6.5 21 10Q21 13 17.5 13Z" fill="#c4c4c4" stroke="#333" stroke-width="1"/></svg>
<svg style="left:1649px;top:1045px" width="17" height="20"><rect x="1" y="4" width="10" height="11" fill="none" stroke="#222" stroke-width="1.3"/><path d="M11 8L16 5V14L11 11" fill="none" stroke="#222" stroke-width="1.3"/><path d="M2 2Q6 0 10 2M2 17Q6 19 10 17" fill="none" stroke="#222" stroke-width="1"/></svg>
<svg style="left:1676px;top:1046px" width="22" height="15"><rect x="3" y="3.5" width="17" height="9" fill="#111"/><rect x="20" y="6" width="2" height="4" fill="#111"/><path d="M1 0V4M4 0V4M0 4H5" stroke="#111"/></svg>
<svg style="left:1708px;top:1045px" width="20" height="18"><path d="M1 16Q1 5 17 2M4 16Q4 8 14 6M7 16Q7 11 12 10" fill="none" stroke="#999" stroke-width="1.2"/><circle cx="13" cy="16" r="1.5" fill="#222"/></svg>
<svg style="left:1736px;top:1045px" width="22" height="20"><path d="M1 7H5L10 2V18L5 13H1Z" fill="none" stroke="#222" stroke-width="1.3"/><path d="M13 7Q15 10 13 13" fill="none" stroke="#222" stroke-width="1.2"/><path d="M16 4Q20 10 16 16M19 2Q24 10 19 18" fill="none" stroke="#999" stroke-width="1.1"/></svg>
<div class="t" style="left:1791.00px;top:1034.00px;font-size:16px;line-height:17px;color:#111;transform:scaleX(0.8358);transform-origin:0 0;">16:32</div>
<div class="t" style="left:1770.70px;top:1058.00px;font-size:16px;line-height:17px;color:#111;transform:scaleX(0.9366);transform-origin:0 0;">09/07/2024</div>
<svg style="left:1868px;top:1044px" width="30" height="30"><path d="M2 1H21V16H9L5 20V16H2Z" fill="#111"/><path d="M5 5H18M5 8.5H18M5 12H14" stroke="#fff" stroke-width="1.2"/><circle cx="19.5" cy="20" r="8.5" fill="#d6e4ec" stroke="#555" stroke-width="1.2"/><text x="15.5" y="25" font-family="Liberation Sans" font-size="13" fill="#111">2</text></svg>
<div class="r" style="left:1913px;top:1030px;width:1px;height:50px;background:#bfcfd6"></div>
</body></html>
